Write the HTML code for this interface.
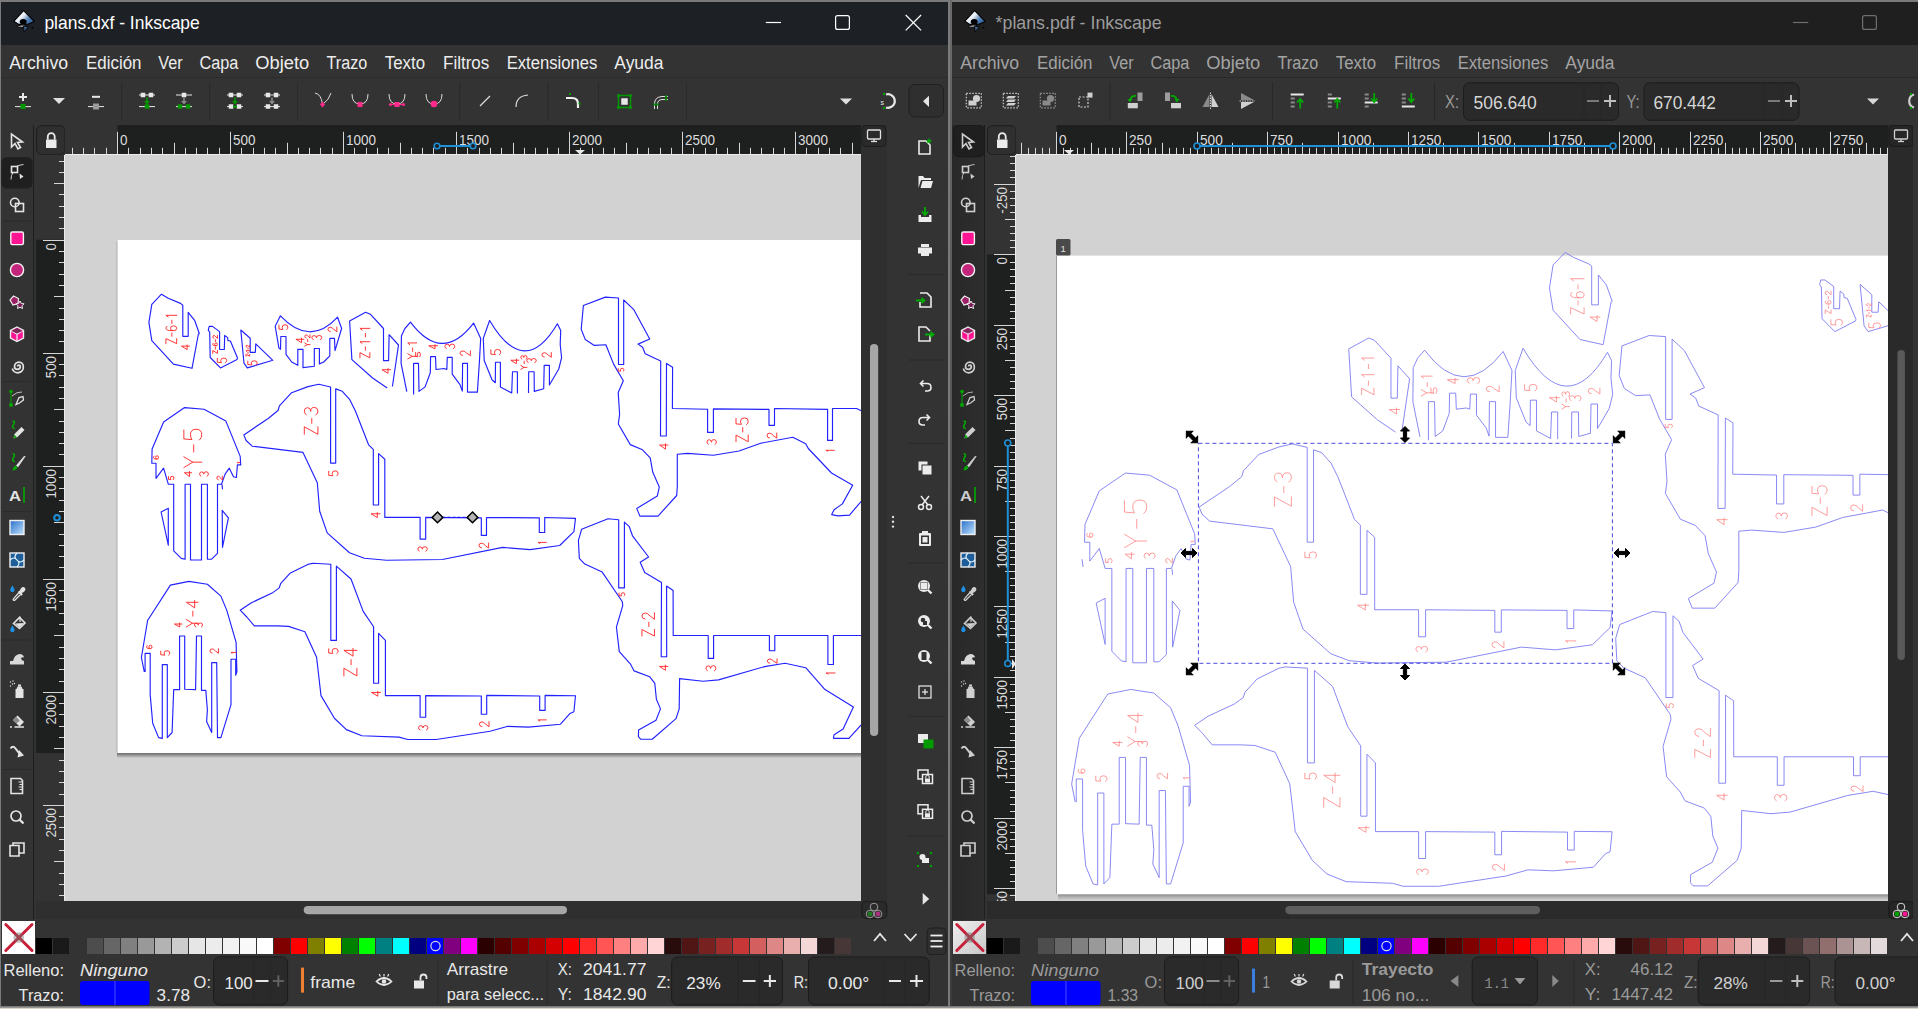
<!DOCTYPE html><html><head><meta charset="utf-8"><style>*{margin:0;padding:0}html,body{width:1918px;height:1009px;overflow:hidden;background:#7a7a7a}svg{position:absolute;left:0;top:0;display:block}</style></head><body><svg width="1918" height="1009" viewBox="0 0 1918 1009" font-family="Liberation Sans"><defs><linearGradient id="lg" x1="0.1" y1="0.2" x2="0.95" y2="0.75"><stop offset="0" stop-color="#ffffff"/><stop offset="0.4" stop-color="#e8eef5"/><stop offset="0.7" stop-color="#5b86b8"/><stop offset="1" stop-color="#2f5f9a"/></linearGradient></defs><rect x="0" y="0" width="1918" height="1009" fill="#7a7a7a"/>
<rect x="1" y="2" width="947" height="1004" fill="#333333" />
<rect x="1" y="2" width="947" height="43" fill="#1d2126" />
<line x1="1" y1="77.5" x2="948" y2="77.5" stroke="#2c2c2c" stroke-width="1" />
<rect x="952" y="2" width="966" height="1004" fill="#333333" />
<rect x="952" y="2" width="966" height="43" fill="#1f1f1f" />
<line x1="952" y1="77.5" x2="1918" y2="77.5" stroke="#282828" stroke-width="1" />
<defs><linearGradient id="tbR" x1="0" y1="0" x2="1" y2="0"><stop offset="0" stop-color="#282828"/><stop offset="1" stop-color="#2e2e2e"/></linearGradient></defs>
<rect x="952" y="125" width="32.5" height="795" fill="url(#tbR)" />
<defs><linearGradient id="bd" x1="0" y1="0" x2="0" y2="1"><stop offset="0" stop-color="#6a6a6a"/><stop offset="1" stop-color="#3a3a3a"/></linearGradient></defs>
<rect x="950" y="0" width="2" height="1006" fill="url(#bd)" />
<rect x="0" y="1006" width="1918" height="1.7" fill="#7a7a7a" />
<rect x="0" y="1007.7" width="1918" height="1.3" fill="#d8d3c2" />
<g transform="translate(0,0)"><path d="M23.6,10.6 L34.2,21.4 L28,24.2 L23.5,23.8 L19,24.6 L13.9,21.1 Z" fill="url(#lg)" stroke="#000" stroke-width="1.1" stroke-linejoin="round"/><ellipse cx="23.2" cy="21.8" rx="3.4" ry="2.7" fill="#000"/><path d="M17.2,26.3 Q21,24 26,25.2 L23,27.6 L18.5,27.2 Z" fill="#9a9a9a" stroke="#000" stroke-width="0.8"/><path d="M23.5,26 L28.2,26.8 L24.2,31.8 Z" fill="#3f6390" stroke="#000" stroke-width="0.8"/><circle cx="32.5" cy="27.7" r="0.9" fill="#000"/></g>
<text x="44.4" y="29" font-size="19" fill="#ffffff" textLength="155.4" lengthAdjust="spacingAndGlyphs" >plans.dxf - Inkscape</text>
<line x1="765.8" y1="22.5" x2="781" y2="22.5" stroke="#ffffff" stroke-width="1.2" />
<rect x="835.6" y="15.6" width="13.8" height="13.8" rx="2" fill="none" stroke="#fff" stroke-width="1.2"/>
<line x1="905.7" y1="15" x2="921.1" y2="30.4" stroke="#fff" stroke-width="1.2" />
<line x1="921.1" y1="15" x2="905.7" y2="30.4" stroke="#fff" stroke-width="1.2" />
<g transform="translate(951,0)"><path d="M23.6,10.6 L34.2,21.4 L28,24.2 L23.5,23.8 L19,24.6 L13.9,21.1 Z" fill="url(#lg)" stroke="#000" stroke-width="1.1" stroke-linejoin="round"/><ellipse cx="23.2" cy="21.8" rx="3.4" ry="2.7" fill="#000"/><path d="M17.2,26.3 Q21,24 26,25.2 L23,27.6 L18.5,27.2 Z" fill="#9a9a9a" stroke="#000" stroke-width="0.8"/><path d="M23.5,26 L28.2,26.8 L24.2,31.8 Z" fill="#3f6390" stroke="#000" stroke-width="0.8"/><circle cx="32.5" cy="27.7" r="0.9" fill="#000"/></g>
<text x="995.6" y="29" font-size="19" fill="#9c9c9c" textLength="166" lengthAdjust="spacingAndGlyphs" >*plans.pdf - Inkscape</text>
<line x1="1792.9" y1="22.5" x2="1808.3" y2="22.5" stroke="#6e6e6e" stroke-width="1.2" />
<rect x="1862.6" y="15.6" width="13.8" height="13.8" rx="2" fill="none" stroke="#6e6e6e" stroke-width="1.2"/>
<text x="9.2" y="68.9" font-size="18" fill="#ededed" textLength="59" lengthAdjust="spacingAndGlyphs" >Archivo</text>
<text x="960.2" y="68.9" font-size="18" fill="#a3a3a3" textLength="59" lengthAdjust="spacingAndGlyphs" >Archivo</text>
<text x="86" y="68.9" font-size="18" fill="#ededed" textLength="55.5" lengthAdjust="spacingAndGlyphs" >Edición</text>
<text x="1037" y="68.9" font-size="18" fill="#a3a3a3" textLength="55.5" lengthAdjust="spacingAndGlyphs" >Edición</text>
<text x="158.3" y="68.9" font-size="18" fill="#ededed" textLength="24.3" lengthAdjust="spacingAndGlyphs" >Ver</text>
<text x="1109.3" y="68.9" font-size="18" fill="#a3a3a3" textLength="24.3" lengthAdjust="spacingAndGlyphs" >Ver</text>
<text x="199.4" y="68.9" font-size="18" fill="#ededed" textLength="39" lengthAdjust="spacingAndGlyphs" >Capa</text>
<text x="1150.4" y="68.9" font-size="18" fill="#a3a3a3" textLength="39" lengthAdjust="spacingAndGlyphs" >Capa</text>
<text x="255.3" y="68.9" font-size="18" fill="#ededed" textLength="54" lengthAdjust="spacingAndGlyphs" >Objeto</text>
<text x="1206.3" y="68.9" font-size="18" fill="#a3a3a3" textLength="54" lengthAdjust="spacingAndGlyphs" >Objeto</text>
<text x="326.6" y="68.9" font-size="18" fill="#ededed" textLength="40.7" lengthAdjust="spacingAndGlyphs" >Trazo</text>
<text x="1277.6" y="68.9" font-size="18" fill="#a3a3a3" textLength="40.7" lengthAdjust="spacingAndGlyphs" >Trazo</text>
<text x="384.8" y="68.9" font-size="18" fill="#ededed" textLength="40.3" lengthAdjust="spacingAndGlyphs" >Texto</text>
<text x="1335.8" y="68.9" font-size="18" fill="#a3a3a3" textLength="40.3" lengthAdjust="spacingAndGlyphs" >Texto</text>
<text x="443" y="68.9" font-size="18" fill="#ededed" textLength="46.3" lengthAdjust="spacingAndGlyphs" >Filtros</text>
<text x="1394" y="68.9" font-size="18" fill="#a3a3a3" textLength="46.3" lengthAdjust="spacingAndGlyphs" >Filtros</text>
<text x="506.7" y="68.9" font-size="18" fill="#ededed" textLength="90.7" lengthAdjust="spacingAndGlyphs" >Extensiones</text>
<text x="1457.7" y="68.9" font-size="18" fill="#a3a3a3" textLength="90.7" lengthAdjust="spacingAndGlyphs" >Extensiones</text>
<text x="614.3" y="68.9" font-size="18" fill="#ededed" textLength="49.2" lengthAdjust="spacingAndGlyphs" >Ayuda</text>
<text x="1565.3" y="68.9" font-size="18" fill="#a3a3a3" textLength="49.2" lengthAdjust="spacingAndGlyphs" >Ayuda</text>
<line x1="121.7" y1="82" x2="121.7" y2="121" stroke="#2b2b2b" stroke-width="1" />
<line x1="209.7" y1="82" x2="209.7" y2="121" stroke="#2b2b2b" stroke-width="1" />
<line x1="297.5" y1="82" x2="297.5" y2="121" stroke="#2b2b2b" stroke-width="1" />
<line x1="459.7" y1="82" x2="459.7" y2="121" stroke="#2b2b2b" stroke-width="1" />
<line x1="547.8" y1="82" x2="547.8" y2="121" stroke="#2b2b2b" stroke-width="1" />
<line x1="598.6" y1="82" x2="598.6" y2="121" stroke="#2b2b2b" stroke-width="1" />
<line x1="686.5" y1="82" x2="686.5" y2="121" stroke="#2b2b2b" stroke-width="1" />
<line x1="1110" y1="82" x2="1110" y2="121" stroke="#282828" stroke-width="1" />
<line x1="1272.5" y1="82" x2="1272.5" y2="121" stroke="#282828" stroke-width="1" />
<line x1="1434.6" y1="82" x2="1434.6" y2="121" stroke="#282828" stroke-width="1" />
<line x1="19" y1="97" x2="27" y2="97" stroke="#e8e8e8" stroke-width="2" />
<line x1="23" y1="93" x2="23" y2="101" stroke="#e8e8e8" stroke-width="2" />
<line x1="15" y1="106.6" x2="31" y2="106.6" stroke="#e8e8e8" stroke-width="1" />
<rect x="20.5" y="104.0" width="5" height="5" fill="#009900" />
<path d="M53,98 L65,98 L59,104 Z" fill="#e0e0e0" stroke="none" stroke-width="1" />
<line x1="92" y1="96.8" x2="100" y2="96.8" stroke="#e8e8e8" stroke-width="2" />
<line x1="88" y1="106.6" x2="104" y2="106.6" stroke="#e8e8e8" stroke-width="1" />
<rect x="93.0" y="103.5" width="6" height="6" fill="#9a9a9a" />
<line x1="139" y1="95" x2="155" y2="95" stroke="#e8e8e8" stroke-width="1" />
<rect x="140.75" y="92.75" width="4.5" height="4.5" fill="#e8e8e8" />
<rect x="148.75" y="92.75" width="4.5" height="4.5" fill="#e8e8e8" />
<path d="M147,97.5 L147,101" fill="none" stroke="#009900" stroke-width="1.6" />
<path d="M144,101 L150,101 L147,104.5 Z" fill="#009900" stroke="none" stroke-width="1" />
<line x1="139" y1="106.6" x2="155" y2="106.6" stroke="#e8e8e8" stroke-width="1" />
<rect x="144.75" y="104.25" width="4.5" height="4.5" fill="#009900" />
<line x1="176" y1="95" x2="192" y2="95" stroke="#e8e8e8" stroke-width="1" />
<rect x="181.75" y="92.75" width="4.5" height="4.5" fill="#e8e8e8" />
<path d="M184,97.5 L184,101" fill="none" stroke="#8a8a8a" stroke-width="1.6" />
<path d="M181,101 L187,101 L184,104.5 Z" fill="#8a8a8a" stroke="none" stroke-width="1" />
<line x1="176" y1="106.6" x2="192" y2="106.6" stroke="#e8e8e8" stroke-width="1" />
<rect x="177.75" y="104.25" width="4.5" height="4.5" fill="#009900" />
<rect x="185.75" y="104.25" width="4.5" height="4.5" fill="#009900" />
<line x1="227" y1="95" x2="243" y2="95" stroke="#e8e8e8" stroke-width="1" />
<rect x="228.75" y="92.75" width="4.5" height="4.5" fill="#e8e8e8" />
<rect x="236.75" y="92.75" width="4.5" height="4.5" fill="#e8e8e8" />
<path d="M235,97.5 L235,101" fill="none" stroke="#009900" stroke-width="1.6" />
<path d="M232,101 L238,101 L235,104.5 Z" fill="#009900" stroke="none" stroke-width="1" />
<line x1="227" y1="106.6" x2="243" y2="106.6" stroke="#e8e8e8" stroke-width="1" />
<rect x="228.75" y="104.25" width="4.5" height="4.5" fill="#e8e8e8" />
<rect x="236.75" y="104.25" width="4.5" height="4.5" fill="#e8e8e8" />
<line x1="233" y1="106.6" x2="237" y2="106.6" stroke="#009900" stroke-width="2" />
<line x1="264" y1="95" x2="280" y2="95" stroke="#e8e8e8" stroke-width="1" />
<rect x="265.75" y="92.75" width="4.5" height="4.5" fill="#e8e8e8" />
<rect x="273.75" y="92.75" width="4.5" height="4.5" fill="#e8e8e8" />
<line x1="270" y1="95" x2="274" y2="95" stroke="#8a8a8a" stroke-width="2" />
<path d="M272,97.5 L272,101" fill="none" stroke="#8a8a8a" stroke-width="1.6" />
<path d="M269,101 L275,101 L272,104.5 Z" fill="#8a8a8a" stroke="none" stroke-width="1" />
<line x1="264" y1="106.6" x2="280" y2="106.6" stroke="#e8e8e8" stroke-width="1" />
<rect x="265.75" y="104.25" width="4.5" height="4.5" fill="#e8e8e8" />
<rect x="273.75" y="104.25" width="4.5" height="4.5" fill="#e8e8e8" />
<path d="M315,93 Q321,94 322.5,104 M331,93 Q329,100 323,104" fill="none" stroke="#dddddd" stroke-width="1" />
<path d="M322.5,101.5 L325,104.5 L322.5,107.5 L320,104.5 Z" fill="#ff2a8a" stroke="none" stroke-width="1" />
<path d="M352,94 Q352,104 360,104 Q368,104 368,94" fill="none" stroke="#dddddd" stroke-width="1" />
<rect x="357.5" y="102.0" width="5" height="5" fill="#ff2a8a" />
<path d="M389,94 Q389,104 397,104 Q405,104 405,94" fill="none" stroke="#dddddd" stroke-width="1" />
<rect x="394.5" y="102.0" width="5" height="5" fill="#ff2a8a" />
<line x1="390" y1="104.5" x2="404" y2="104.5" stroke="#ff2a8a" stroke-width="1.2" />
<circle cx="390.5" cy="104.5" r="1.6" fill="#ff2a8a"/><circle cx="403.5" cy="104.5" r="1.6" fill="#ff2a8a"/>
<path d="M426,94 Q426,104 434,104 Q442,104 442,94" fill="none" stroke="#dddddd" stroke-width="1" />
<circle cx="434" cy="104" r="3.3" fill="#ff2a8a"/>
<line x1="480" y1="106" x2="490" y2="96" stroke="#dddddd" stroke-width="1.2" />
<path d="M516,107 Q516,96 528,95" fill="none" stroke="#dddddd" stroke-width="1.2" />
<path d="M566,98 L572,98 Q578,98 578,104 L578,108" fill="none" stroke="#f0f0f0" stroke-width="2.2" />
<rect x="569.0" y="93.0" width="2" height="2" fill="#009900" />
<rect x="578.5" y="102.5" width="2" height="2" fill="#009900" />
<rect x="618.5" y="95.5" width="12" height="12" fill="none" stroke="#009900" stroke-width="1.5"/>
<rect x="621.25" y="98.25" width="6.5" height="6.5" fill="#e8e8e8" />
<rect x="617.2" y="94.2" width="2.6" height="2.6" fill="#009900" />
<rect x="629.2" y="94.2" width="2.6" height="2.6" fill="#009900" />
<rect x="617.2" y="106.2" width="2.6" height="2.6" fill="#009900" />
<rect x="629.2" y="106.2" width="2.6" height="2.6" fill="#009900" />
<path d="M654.5,109 L654.5,104 Q654.5,97 662,96.5 L668,96.5 M657.5,109 L657.5,104 Q657.5,100 662,99.5 L668,99.5" fill="none" stroke="#e0e0e0" stroke-width="1" />
<rect x="653.4" y="103.4" width="2.2" height="2.2" fill="#009900" />
<rect x="656.4" y="103.4" width="2.2" height="2.2" fill="#009900" />
<rect x="664.9" y="95.4" width="2.2" height="2.2" fill="#009900" />
<rect x="664.9" y="98.4" width="2.2" height="2.2" fill="#009900" />
<path d="M840,98.6 L852,98.6 L846,104.6 Z" fill="#e0e0e0" stroke="none" stroke-width="1" />
<path d="M886,94.5 A6.8,6.8 0 1 1 886,107.5" fill="none" stroke="#e8e8e8" stroke-width="2.2" />
<rect x="882.9" y="92.9" width="2.2" height="2.2" fill="#009900" />
<rect x="882.9" y="106.9" width="2.2" height="2.2" fill="#009900" />
<text x="880.5" y="104.5" font-size="7" fill="#e8e8e8" >s</text>
<rect x="909" y="84.5" width="34.5" height="32.5" rx="6" fill="#2f2f2f" stroke="#202020" stroke-width="1"/>
<path d="M929,95.7 L929,106.9 L923,101.3 Z" fill="#e6e6e6" stroke="none" stroke-width="1" />
<rect x="966.3" y="93.3" width="15" height="14.5" fill="none" stroke="#d0d0d0" stroke-width="1.2" stroke-dasharray="1.5,1.5"/>
<circle cx="976.5" cy="98.5" r="3.6" fill="#d0d0d0"/>
<rect x="968.5" y="100.5" width="8" height="5" fill="#d0d0d0" />
<rect x="1003.3" y="93.3" width="15" height="14.5" fill="none" stroke="#d0d0d0" stroke-width="1.2" stroke-dasharray="1.5,1.5"/>
<path d="M1006,98.5 L1008,96 L1016,96 L1014,98.5 Z" fill="#d0d0d0" stroke="none" stroke-width="1" />
<path d="M1006,102.0 L1008,99.5 L1016,99.5 L1014,102.0 Z" fill="#d0d0d0" stroke="none" stroke-width="1" />
<path d="M1006,105.5 L1008,103 L1016,103 L1014,105.5 Z" fill="#d0d0d0" stroke="none" stroke-width="1" />
<rect x="1040.3" y="93.3" width="15" height="14.5" fill="none" stroke="#9a9a9a" stroke-width="1.2" stroke-dasharray="1.5,1.5"/>
<circle cx="1050.5" cy="98.5" r="3.6" fill="#8a8a8a"/>
<rect x="1042.5" y="100.5" width="8" height="5" fill="#8a8a8a" />
<rect x="1079" y="97" width="9" height="10" fill="none" stroke="#d0d0d0" stroke-width="1.2" stroke-dasharray="2,1.5"/>
<rect x="1087.5" y="92.6" width="5" height="5" fill="#d0d0d0" />
<rect x="1137.5" y="92.5" width="5" height="8.5" fill="#9c9c9c" />
<rect x="1127.8" y="103" width="10" height="5.3" fill="#d0d0d0" />
<path d="M1136,96 Q1131,95.5 1130,100.5" fill="none" stroke="#00aa00" stroke-width="1.8" />
<path d="M1127.5,99 L1130,102.5 L1132.5,99 Z" fill="#00aa00" stroke="none" stroke-width="1" />
<rect x="1165" y="92.5" width="5" height="8.5" fill="#9c9c9c" />
<rect x="1171" y="103" width="10" height="5.3" fill="#d0d0d0" />
<path d="M1171,96 Q1176,95.5 1177,100.5" fill="none" stroke="#00aa00" stroke-width="1.8" />
<path d="M1174.5,99 L1177,102.5 L1179.5,99 Z" fill="#00aa00" stroke="none" stroke-width="1" />
<path d="M1209.5,94 L1209.5,107 L1202.5,107 Z" fill="#8a8a8a" stroke="none" stroke-width="1" />
<path d="M1211.5,94 L1211.5,107 L1218.5,107 Z" fill="#d0d0d0" stroke="none" stroke-width="1" />
<line x1="1210.5" y1="92.5" x2="1210.5" y2="109" stroke="#d0d0d0" stroke-width="1" stroke-dasharray="1.5,1"/>
<path d="M1241,93 L1241,100 L1254,100 Z" fill="#8a8a8a" stroke="none" stroke-width="1" />
<path d="M1241,102 L1241,109 L1254,102 Z" fill="#d0d0d0" stroke="none" stroke-width="1" />
<line x1="1239.5" y1="101" x2="1255" y2="101" stroke="#d0d0d0" stroke-width="1" stroke-dasharray="1.5,1"/>
<rect x="1290.7" y="93.5" width="13" height="2" fill="#e8e8e8" />
<rect x="1290.7" y="97.5" width="4" height="2" fill="#8a8a8a" />
<rect x="1290.7" y="101.5" width="4" height="2" fill="#8a8a8a" />
<rect x="1290.7" y="105.5" width="4" height="2" fill="#8a8a8a" />
<path d="M1300.2,108.5 L1300.2,100 M1297.2,102.5 L1300.2,99 L1303.2,102.5" fill="none" stroke="#00aa00" stroke-width="1.8" />
<rect x="1327.8" y="93.5" width="4" height="2" fill="#8a8a8a" />
<rect x="1327.8" y="97.5" width="13" height="2" fill="#e8e8e8" />
<rect x="1327.8" y="101.5" width="4" height="2" fill="#8a8a8a" />
<rect x="1327.8" y="105.5" width="4" height="2" fill="#8a8a8a" />
<path d="M1337.3,108.5 L1337.3,100 M1334.3,102.5 L1337.3,99 L1340.3,102.5" fill="none" stroke="#00aa00" stroke-width="1.8" />
<rect x="1364.7" y="93.5" width="4" height="2" fill="#8a8a8a" />
<rect x="1364.7" y="97.5" width="4" height="2" fill="#8a8a8a" />
<rect x="1364.7" y="101.5" width="13" height="2" fill="#e8e8e8" />
<rect x="1364.7" y="105.5" width="4" height="2" fill="#8a8a8a" />
<path d="M1374.2,93 L1374.2,101 M1371.2,98.5 L1374.2,102 L1377.2,98.5" fill="none" stroke="#00aa00" stroke-width="1.8" />
<rect x="1401.8" y="93.5" width="4" height="2" fill="#8a8a8a" />
<rect x="1401.8" y="97.5" width="4" height="2" fill="#8a8a8a" />
<rect x="1401.8" y="101.5" width="4" height="2" fill="#8a8a8a" />
<rect x="1401.8" y="105.5" width="13" height="2" fill="#e8e8e8" />
<path d="M1411.3,93 L1411.3,101 M1408.3,98.5 L1411.3,102 L1414.3,98.5" fill="none" stroke="#00aa00" stroke-width="1.8" />
<text x="1445" y="108.4" font-size="18" fill="#9a9a9a" textLength="14" lengthAdjust="spacingAndGlyphs" >X:</text>
<rect x="1463.5" y="82.8" width="155" height="37.5" rx="6" fill="#2a2a2a" stroke="#1c1c1c" stroke-width="1"/>
<line x1="1584" y1="83.8" x2="1584" y2="119.3" stroke="#262626" stroke-width="1" />
<line x1="1601.4" y1="83.8" x2="1601.4" y2="119.3" stroke="#262626" stroke-width="1" />
<text x="1473.6" y="108.6" font-size="18" fill="#d6d6d6" textLength="63.2" lengthAdjust="spacingAndGlyphs" >506.640</text>
<line x1="1587" y1="101" x2="1599" y2="101" stroke="#7a7a7a" stroke-width="2" />
<line x1="1604" y1="101" x2="1616" y2="101" stroke="#bdbdbd" stroke-width="2" />
<line x1="1610" y1="95" x2="1610" y2="107" stroke="#bdbdbd" stroke-width="2" />
<text x="1626.5" y="108.4" font-size="18" fill="#9a9a9a" textLength="13.1" lengthAdjust="spacingAndGlyphs" >Y:</text>
<rect x="1644" y="82.8" width="155" height="37.5" rx="6" fill="#2a2a2a" stroke="#1c1c1c" stroke-width="1"/>
<line x1="1764.5" y1="83.8" x2="1764.5" y2="119.3" stroke="#262626" stroke-width="1" />
<line x1="1782" y1="83.8" x2="1782" y2="119.3" stroke="#262626" stroke-width="1" />
<text x="1653.4" y="108.6" font-size="18" fill="#d6d6d6" textLength="62.6" lengthAdjust="spacingAndGlyphs" >670.442</text>
<line x1="1768" y1="101" x2="1780" y2="101" stroke="#7a7a7a" stroke-width="2" />
<line x1="1785" y1="101" x2="1797" y2="101" stroke="#bdbdbd" stroke-width="2" />
<line x1="1791" y1="95" x2="1791" y2="107" stroke="#bdbdbd" stroke-width="2" />
<path d="M1867,98.6 L1879,98.6 L1873,104.6 Z" fill="#d8d8d8" stroke="none" stroke-width="1" />
<path d="M1914,94.5 A6.8,6.8 0 0 0 1914,107.5" fill="none" stroke="#cfcfcf" stroke-width="2.2" />
<rect x="1909.9" y="92.9" width="2.2" height="2.2" fill="#009900" />
<rect x="1909.9" y="106.9" width="2.2" height="2.2" fill="#009900" />
<line x1="33.5" y1="125" x2="33.5" y2="919" stroke="#1e1e1e" stroke-width="1" />
<line x1="3" y1="221" x2="31" y2="221" stroke="#2b2b2b" stroke-width="1" />
<line x1="3" y1="381.5" x2="31" y2="381.5" stroke="#2b2b2b" stroke-width="1" />
<line x1="3" y1="511.5" x2="31" y2="511.5" stroke="#2b2b2b" stroke-width="1" />
<line x1="3" y1="640" x2="31" y2="640" stroke="#2b2b2b" stroke-width="1" />
<line x1="3" y1="769.5" x2="31" y2="769.5" stroke="#2b2b2b" stroke-width="1" />
<rect x="1.5" y="157.2" width="31" height="31.2" rx="5" fill="#1f1f1f"/>
<g transform="translate(0,0)">
<path d="M11.5,134 L11.5,147 L15,143.5 L18,149 L20.5,147.5 L17.5,142.5 L22.5,142 Z" fill="none" stroke="#e4e4e4" stroke-width="1.6" />
<rect x="11.5" y="166.5" width="6" height="6" fill="none" stroke="#e4e4e4" stroke-width="1.6"/>
<path d="M17,166 Q20,165 23.5,164.5" fill="none" stroke="#e4e4e4" stroke-width="0.9" />
<path d="M11,179.5 Q11,175 13,172.5" fill="none" stroke="#e4e4e4" stroke-width="0.9" />
<path d="M19.5,173.5 L23.5,176.5 L20,179 Z" fill="#e4e4e4" stroke="none" stroke-width="1" />
<circle cx="14.8" cy="202.5" r="4.3" fill="none" stroke="#e4e4e4" stroke-width="1.6"/>
<rect x="15.5" y="203.5" width="8" height="8" fill="none" stroke="#e4e4e4" stroke-width="1.6"/>
<rect x="10.8" y="232" width="12.6" height="12.6" rx="1.5" fill="#ff1493" stroke="#f4f4f4" stroke-width="1.4"/>
<circle cx="17" cy="270" r="6.6" fill="#c2257a" stroke="#f4f4f4" stroke-width="1.4"/>
<path d="M13.5,296 L18.5,298.5 L18,303.5 L13,305 L10,300 Z" fill="#9d1f66" stroke="#f0f0f0" stroke-width="1.2" />
<path d="M20,301 L21.3,303.5 L24,303.8 L22,305.8 L22.5,308.5 L20,307.2 L17.5,308.5 L18,305.8 L16,303.8 L18.7,303.5 Z" fill="#7a1a55" stroke="#f0f0f0" stroke-width="1" />
<path d="M17,327 L23.5,330.5 L23.5,338 L17,341.5 L10.5,338 L10.5,330.5 Z" fill="#ff1493" stroke="#f0f0f0" stroke-width="1.4" />
<path d="M10.5,330.5 L17,334 L23.5,330.5 M17,334 L17,341.5" fill="none" stroke="#f0f0f0" stroke-width="1.2" />
<path d="M11.5,331 L17,328 L22.5,331 L17,333.5 Z" fill="#7b2a5c" stroke="none" stroke-width="1" />
<path d="M17.5,366.5 A1.4,1.4 0 0 1 20.3,366.5 A2.9,2.9 0 0 1 14.5,366.5 A4.4,4.4 0 0 1 23.3,366.5 A5.6,5.6 0 0 1 12.3,368.5" fill="none" stroke="#e4e4e4" stroke-width="1.7" />
<circle cx="11" cy="391.5" r="1.8" fill="#0a0"/>
<line x1="11" y1="392" x2="11" y2="404" stroke="#0a0" stroke-width="1" />
<rect x="9.3" y="403.3" width="3.4" height="3.4" fill="#0a0" />
<path d="M12,396 Q17,391.5 22,392" fill="none" stroke="#e4e4e4" stroke-width="0.8" />
<path d="M16,404.5 L19,397.5 L23,396.5 L23.5,400 L19.5,403 Z" fill="none" stroke="#e4e4e4" stroke-width="1.3" />
<path d="M12.5,421.5 Q16,420.5 13.5,424.5 Q11,428.5 15,428.5" fill="none" stroke="#0a0" stroke-width="1.5" />
<path d="M13.5,438.5 L14.5,434 L21.5,427 L24.5,430 L17.5,437 Z" fill="#e4e4e4" stroke="none" stroke-width="1" />
<path d="M13.5,438.5 L14.5,434.8 L17,437.3 Z" fill="#0a0" stroke="none" stroke-width="1" />
<path d="M12.5,454 Q16,453.5 13.5,457.5 Q11,461.5 15,461.5" fill="none" stroke="#0a0" stroke-width="1.5" />
<path d="M12.5,470.5 Q13,466.5 15.5,465.5 L17.5,467.5 Q16.5,470 12.5,470.5 Z" fill="#0a0" stroke="none" stroke-width="1" />
<path d="M16.5,465.5 L24.5,456 L25,456.5 L18,466.8 Z" fill="#e4e4e4" stroke="#e4e4e4" stroke-width="0.8" />
<text x="9" y="501" font-size="14" fill="#e4e4e4" textLength="12" lengthAdjust="spacingAndGlyphs" font-weight="bold">A</text>
<line x1="24" y1="487" x2="24" y2="503" stroke="#0a0" stroke-width="1.6" />
<defs><linearGradient id="gg" x1="0" y1="0" x2="1" y2="1"><stop offset="0" stop-color="#2b6fc9"/><stop offset="1" stop-color="#bfe3ff"/></linearGradient></defs>
<rect x="10" y="520.5" width="14" height="14" fill="url(#gg)" stroke="#f0f0f0" stroke-width="1.4"/>
<rect x="10" y="553" width="14" height="14" fill="#1f5f99" stroke="#f0f0f0" stroke-width="1.4"/>
<path d="M10,560 Q14,556 17,560 Q20,564 24,560 M17,553 Q13,557 17,560 Q21,563 17,567" fill="none" stroke="#e8f4ff" stroke-width="1.1" />
<path d="M12.4,585.5 Q9.8,589.5 10.2,590.5 Q10.8,592.2 12.4,592.2 Q14,592.2 14.6,590.5 Q15,589.5 12.4,585.5 Z" fill="#1e90e8" stroke="none" stroke-width="1" />
<path d="M13.6,598.6 Q12.6,599.6 13.6,600.2 Q14.4,600.6 15,600 L21,594 L19.2,592.2 Z" fill="none" stroke="#e4e4e4" stroke-width="1.3" />
<path d="M18.6,591.4 L22.2,595 M20.6,590.8 Q22.6,586.6 24.2,588.4 Q25.6,590 21.4,592.2 Z" fill="#e4e4e4" stroke="#e4e4e4" stroke-width="1.8" />
<path d="M12.4,625.5 Q9.8,629.5 10.2,630.5 Q10.8,632.2 12.4,632.2 Q14,632.2 14.6,630.5 Q15,629.5 12.4,625.5 Z" fill="#1e90e8" stroke="none" stroke-width="1" />
<path d="M13.5,623.5 L19.5,617.5 L25,623 L19.5,628.5 Z" fill="none" stroke="#e4e4e4" stroke-width="1.6" />
<path d="M15,623.5 L24,623 L19.5,627.5 Z" fill="#e4e4e4" stroke="none" stroke-width="1" />
<line x1="20" y1="616.5" x2="20" y2="622" stroke="#e4e4e4" stroke-width="1.2" />
<path d="M10,664.5 L10,661 L13,661 Q14.5,654.5 19.5,654 Q23.5,654 24,657.5 Q22,656.5 21,658.5 Q21.5,660.5 24,661 L24,664.5 Z" fill="#d8d8d8" stroke="none" stroke-width="1" />
<rect x="15.5" y="689" width="8" height="9" fill="#e4e4e4" />
<path d="M16.5,689 L17.5,686.5 L21.5,686.5 L22.5,689 Z" fill="#e4e4e4" stroke="none" stroke-width="1" />
<rect x="18" y="684.5" width="3" height="2" fill="#e4e4e4" />
<circle cx="10.5" cy="682" r="0.7" fill="#e4e4e4"/>
<circle cx="12.5" cy="684" r="0.7" fill="#e4e4e4"/>
<circle cx="10.5" cy="686" r="0.7" fill="#e4e4e4"/>
<circle cx="13" cy="681" r="0.7" fill="#e4e4e4"/>
<circle cx="14.5" cy="683.5" r="0.7" fill="#e4e4e4"/>
<path d="M17.5,715.5 L24,722 L19.5,726.5 L13,720 Z" fill="#e4e4e4" stroke="none" stroke-width="1" />
<path d="M13,720 L16.2,716.8 L19.8,720.4 L16.6,723.6 Z" fill="#8a8a8a" stroke="none" stroke-width="1" />
<line x1="10" y1="727" x2="12" y2="727" stroke="#e4e4e4" stroke-width="1.5" />
<line x1="14.5" y1="727" x2="24" y2="727" stroke="#e4e4e4" stroke-width="1.5" />
<path d="M10.5,748.5 Q13,745 15.5,748.5 Q18,752.5 21,754" fill="none" stroke="#e4e4e4" stroke-width="2" />
<path d="M19,750 L24,755.5 L17.5,757.5 Z" fill="#e4e4e4" stroke="none" stroke-width="1" />
<path d="M11,778.5 L20.5,778.5 L22.5,780.5 L22.5,793.5 L11,793.5 Z" fill="none" stroke="#e4e4e4" stroke-width="1.6" />
<line x1="18.5" y1="782" x2="22.5" y2="782" stroke="#e4e4e4" stroke-width="1" />
<line x1="19.5" y1="784.5" x2="22.5" y2="784.5" stroke="#e4e4e4" stroke-width="1" />
<line x1="18.5" y1="787" x2="22.5" y2="787" stroke="#e4e4e4" stroke-width="1" />
<line x1="19.5" y1="789.5" x2="22.5" y2="789.5" stroke="#e4e4e4" stroke-width="1" />
<circle cx="16" cy="816" r="5" fill="none" stroke="#e4e4e4" stroke-width="1.7"/>
<line x1="19.6" y1="819.6" x2="23.5" y2="823.5" stroke="#e4e4e4" stroke-width="2.2" />
<path d="M10,845.5 L10,856 L19,856 L19,845.5 Z" fill="none" stroke="#e4e4e4" stroke-width="1.6" />
<path d="M13,845.5 L13,843 L24,843 L24,853 L19,853" fill="none" stroke="#e4e4e4" stroke-width="1.6" />
</g>
<line x1="984.5" y1="125" x2="984.5" y2="919" stroke="#1e1e1e" stroke-width="1" />
<line x1="954" y1="221" x2="982" y2="221" stroke="#2b2b2b" stroke-width="1" />
<line x1="954" y1="381.5" x2="982" y2="381.5" stroke="#2b2b2b" stroke-width="1" />
<line x1="954" y1="511.5" x2="982" y2="511.5" stroke="#2b2b2b" stroke-width="1" />
<line x1="954" y1="640" x2="982" y2="640" stroke="#2b2b2b" stroke-width="1" />
<line x1="954" y1="769.5" x2="982" y2="769.5" stroke="#2b2b2b" stroke-width="1" />
<rect x="953.5" y="125.5" width="31" height="31.2" rx="5" fill="#1f1f1f" stroke="#1a1a1a"/>
<g transform="translate(951,0)">
<path d="M11.5,134 L11.5,147 L15,143.5 L18,149 L20.5,147.5 L17.5,142.5 L22.5,142 Z" fill="none" stroke="#cfcfcf" stroke-width="1.6" />
<rect x="11.5" y="166.5" width="6" height="6" fill="none" stroke="#cfcfcf" stroke-width="1.6"/>
<path d="M17,166 Q20,165 23.5,164.5" fill="none" stroke="#cfcfcf" stroke-width="0.9" />
<path d="M11,179.5 Q11,175 13,172.5" fill="none" stroke="#cfcfcf" stroke-width="0.9" />
<path d="M19.5,173.5 L23.5,176.5 L20,179 Z" fill="#cfcfcf" stroke="none" stroke-width="1" />
<circle cx="14.8" cy="202.5" r="4.3" fill="none" stroke="#cfcfcf" stroke-width="1.6"/>
<rect x="15.5" y="203.5" width="8" height="8" fill="none" stroke="#cfcfcf" stroke-width="1.6"/>
<rect x="10.8" y="232" width="12.6" height="12.6" rx="1.5" fill="#ff1493" stroke="#f4f4f4" stroke-width="1.4"/>
<circle cx="17" cy="270" r="6.6" fill="#c2257a" stroke="#f4f4f4" stroke-width="1.4"/>
<path d="M13.5,296 L18.5,298.5 L18,303.5 L13,305 L10,300 Z" fill="#9d1f66" stroke="#f0f0f0" stroke-width="1.2" />
<path d="M20,301 L21.3,303.5 L24,303.8 L22,305.8 L22.5,308.5 L20,307.2 L17.5,308.5 L18,305.8 L16,303.8 L18.7,303.5 Z" fill="#7a1a55" stroke="#f0f0f0" stroke-width="1" />
<path d="M17,327 L23.5,330.5 L23.5,338 L17,341.5 L10.5,338 L10.5,330.5 Z" fill="#ff1493" stroke="#f0f0f0" stroke-width="1.4" />
<path d="M10.5,330.5 L17,334 L23.5,330.5 M17,334 L17,341.5" fill="none" stroke="#f0f0f0" stroke-width="1.2" />
<path d="M11.5,331 L17,328 L22.5,331 L17,333.5 Z" fill="#7b2a5c" stroke="none" stroke-width="1" />
<path d="M17.5,366.5 A1.4,1.4 0 0 1 20.3,366.5 A2.9,2.9 0 0 1 14.5,366.5 A4.4,4.4 0 0 1 23.3,366.5 A5.6,5.6 0 0 1 12.3,368.5" fill="none" stroke="#cfcfcf" stroke-width="1.7" />
<circle cx="11" cy="391.5" r="1.8" fill="#0a0"/>
<line x1="11" y1="392" x2="11" y2="404" stroke="#0a0" stroke-width="1" />
<rect x="9.3" y="403.3" width="3.4" height="3.4" fill="#0a0" />
<path d="M12,396 Q17,391.5 22,392" fill="none" stroke="#cfcfcf" stroke-width="0.8" />
<path d="M16,404.5 L19,397.5 L23,396.5 L23.5,400 L19.5,403 Z" fill="none" stroke="#cfcfcf" stroke-width="1.3" />
<path d="M12.5,421.5 Q16,420.5 13.5,424.5 Q11,428.5 15,428.5" fill="none" stroke="#0a0" stroke-width="1.5" />
<path d="M13.5,438.5 L14.5,434 L21.5,427 L24.5,430 L17.5,437 Z" fill="#cfcfcf" stroke="none" stroke-width="1" />
<path d="M13.5,438.5 L14.5,434.8 L17,437.3 Z" fill="#0a0" stroke="none" stroke-width="1" />
<path d="M12.5,454 Q16,453.5 13.5,457.5 Q11,461.5 15,461.5" fill="none" stroke="#0a0" stroke-width="1.5" />
<path d="M12.5,470.5 Q13,466.5 15.5,465.5 L17.5,467.5 Q16.5,470 12.5,470.5 Z" fill="#0a0" stroke="none" stroke-width="1" />
<path d="M16.5,465.5 L24.5,456 L25,456.5 L18,466.8 Z" fill="#cfcfcf" stroke="#cfcfcf" stroke-width="0.8" />
<text x="9" y="501" font-size="14" fill="#cfcfcf" textLength="12" lengthAdjust="spacingAndGlyphs" font-weight="bold">A</text>
<line x1="24" y1="487" x2="24" y2="503" stroke="#0a0" stroke-width="1.6" />
<defs><linearGradient id="gg" x1="0" y1="0" x2="1" y2="1"><stop offset="0" stop-color="#2b6fc9"/><stop offset="1" stop-color="#bfe3ff"/></linearGradient></defs>
<rect x="10" y="520.5" width="14" height="14" fill="url(#gg)" stroke="#f0f0f0" stroke-width="1.4"/>
<rect x="10" y="553" width="14" height="14" fill="#1f5f99" stroke="#f0f0f0" stroke-width="1.4"/>
<path d="M10,560 Q14,556 17,560 Q20,564 24,560 M17,553 Q13,557 17,560 Q21,563 17,567" fill="none" stroke="#e8f4ff" stroke-width="1.1" />
<path d="M12.4,585.5 Q9.8,589.5 10.2,590.5 Q10.8,592.2 12.4,592.2 Q14,592.2 14.6,590.5 Q15,589.5 12.4,585.5 Z" fill="#1e90e8" stroke="none" stroke-width="1" />
<path d="M13.6,598.6 Q12.6,599.6 13.6,600.2 Q14.4,600.6 15,600 L21,594 L19.2,592.2 Z" fill="none" stroke="#cfcfcf" stroke-width="1.3" />
<path d="M18.6,591.4 L22.2,595 M20.6,590.8 Q22.6,586.6 24.2,588.4 Q25.6,590 21.4,592.2 Z" fill="#cfcfcf" stroke="#cfcfcf" stroke-width="1.8" />
<path d="M12.4,625.5 Q9.8,629.5 10.2,630.5 Q10.8,632.2 12.4,632.2 Q14,632.2 14.6,630.5 Q15,629.5 12.4,625.5 Z" fill="#1e90e8" stroke="none" stroke-width="1" />
<path d="M13.5,623.5 L19.5,617.5 L25,623 L19.5,628.5 Z" fill="none" stroke="#cfcfcf" stroke-width="1.6" />
<path d="M15,623.5 L24,623 L19.5,627.5 Z" fill="#cfcfcf" stroke="none" stroke-width="1" />
<line x1="20" y1="616.5" x2="20" y2="622" stroke="#cfcfcf" stroke-width="1.2" />
<path d="M10,664.5 L10,661 L13,661 Q14.5,654.5 19.5,654 Q23.5,654 24,657.5 Q22,656.5 21,658.5 Q21.5,660.5 24,661 L24,664.5 Z" fill="#d8d8d8" stroke="none" stroke-width="1" />
<rect x="15.5" y="689" width="8" height="9" fill="#cfcfcf" />
<path d="M16.5,689 L17.5,686.5 L21.5,686.5 L22.5,689 Z" fill="#cfcfcf" stroke="none" stroke-width="1" />
<rect x="18" y="684.5" width="3" height="2" fill="#cfcfcf" />
<circle cx="10.5" cy="682" r="0.7" fill="#cfcfcf"/>
<circle cx="12.5" cy="684" r="0.7" fill="#cfcfcf"/>
<circle cx="10.5" cy="686" r="0.7" fill="#cfcfcf"/>
<circle cx="13" cy="681" r="0.7" fill="#cfcfcf"/>
<circle cx="14.5" cy="683.5" r="0.7" fill="#cfcfcf"/>
<path d="M17.5,715.5 L24,722 L19.5,726.5 L13,720 Z" fill="#cfcfcf" stroke="none" stroke-width="1" />
<path d="M13,720 L16.2,716.8 L19.8,720.4 L16.6,723.6 Z" fill="#8a8a8a" stroke="none" stroke-width="1" />
<line x1="10" y1="727" x2="12" y2="727" stroke="#cfcfcf" stroke-width="1.5" />
<line x1="14.5" y1="727" x2="24" y2="727" stroke="#cfcfcf" stroke-width="1.5" />
<path d="M10.5,748.5 Q13,745 15.5,748.5 Q18,752.5 21,754" fill="none" stroke="#cfcfcf" stroke-width="2" />
<path d="M19,750 L24,755.5 L17.5,757.5 Z" fill="#cfcfcf" stroke="none" stroke-width="1" />
<path d="M11,778.5 L20.5,778.5 L22.5,780.5 L22.5,793.5 L11,793.5 Z" fill="none" stroke="#cfcfcf" stroke-width="1.6" />
<line x1="18.5" y1="782" x2="22.5" y2="782" stroke="#cfcfcf" stroke-width="1" />
<line x1="19.5" y1="784.5" x2="22.5" y2="784.5" stroke="#cfcfcf" stroke-width="1" />
<line x1="18.5" y1="787" x2="22.5" y2="787" stroke="#cfcfcf" stroke-width="1" />
<line x1="19.5" y1="789.5" x2="22.5" y2="789.5" stroke="#cfcfcf" stroke-width="1" />
<circle cx="16" cy="816" r="5" fill="none" stroke="#cfcfcf" stroke-width="1.7"/>
<line x1="19.6" y1="819.6" x2="23.5" y2="823.5" stroke="#cfcfcf" stroke-width="2.2" />
<path d="M10,845.5 L10,856 L19,856 L19,845.5 Z" fill="none" stroke="#cfcfcf" stroke-width="1.6" />
<path d="M13,845.5 L13,843 L24,843 L24,853 L19,853" fill="none" stroke="#cfcfcf" stroke-width="1.6" />
</g>
<rect x="36.5" y="125.7" width="28.5" height="28.8" rx="5" fill="#2f2f2f" stroke="#1d1d1d" stroke-width="1"/>
<rect x="46" y="139.5" width="10.5" height="8.5" fill="#ececec"/>
<path d="M47.8,139.5 L47.8,136.5 A3.45,3.45 0 0 1 54.7,136.5 L54.7,139.5" fill="none" stroke="#ececec" stroke-width="1.8" />
<rect x="987.5" y="125.7" width="28.5" height="28.8" rx="5" fill="#2f2f2f" stroke="#1d1d1d" stroke-width="1"/>
<rect x="997" y="139.5" width="10.5" height="8.5" fill="#ececec"/>
<path d="M998.8,139.5 L998.8,136.5 A3.45,3.45 0 0 1 1005.7,136.5 L1005.7,139.5" fill="none" stroke="#ececec" stroke-width="1.8" />
<rect x="65" y="125" width="796" height="29.5" fill="#333333" />
<rect x="117.5" y="125" width="743.5" height="29.5" fill="#1e1f1f" />
<line x1="72.5" y1="147.8" x2="72.5" y2="154.5" stroke="#d6d6d6" stroke-width="1" />
<line x1="83.5" y1="147.8" x2="83.5" y2="154.5" stroke="#d6d6d6" stroke-width="1" />
<line x1="94.5" y1="147.8" x2="94.5" y2="154.5" stroke="#d6d6d6" stroke-width="1" />
<line x1="106.5" y1="147.8" x2="106.5" y2="154.5" stroke="#d6d6d6" stroke-width="1" />
<line x1="117.5" y1="131.8" x2="117.5" y2="154.5" stroke="#d6d6d6" stroke-width="1" />
<text x="120" y="144.6" font-size="14.5" fill="#dcdcdc" textLength="7.5" lengthAdjust="spacingAndGlyphs" >0</text>
<line x1="128.5" y1="147.8" x2="128.5" y2="154.5" stroke="#d6d6d6" stroke-width="1" />
<line x1="140.5" y1="147.8" x2="140.5" y2="154.5" stroke="#d6d6d6" stroke-width="1" />
<line x1="151.5" y1="147.8" x2="151.5" y2="154.5" stroke="#d6d6d6" stroke-width="1" />
<line x1="162.5" y1="147.8" x2="162.5" y2="154.5" stroke="#d6d6d6" stroke-width="1" />
<line x1="174.5" y1="142.8" x2="174.5" y2="154.5" stroke="#d6d6d6" stroke-width="1" />
<line x1="185.5" y1="147.8" x2="185.5" y2="154.5" stroke="#d6d6d6" stroke-width="1" />
<line x1="196.5" y1="147.8" x2="196.5" y2="154.5" stroke="#d6d6d6" stroke-width="1" />
<line x1="207.5" y1="147.8" x2="207.5" y2="154.5" stroke="#d6d6d6" stroke-width="1" />
<line x1="219.5" y1="147.8" x2="219.5" y2="154.5" stroke="#d6d6d6" stroke-width="1" />
<line x1="230.5" y1="131.8" x2="230.5" y2="154.5" stroke="#d6d6d6" stroke-width="1" />
<text x="233" y="144.6" font-size="14.5" fill="#dcdcdc" textLength="22.5" lengthAdjust="spacingAndGlyphs" >500</text>
<line x1="241.5" y1="147.8" x2="241.5" y2="154.5" stroke="#d6d6d6" stroke-width="1" />
<line x1="253.5" y1="147.8" x2="253.5" y2="154.5" stroke="#d6d6d6" stroke-width="1" />
<line x1="264.5" y1="147.8" x2="264.5" y2="154.5" stroke="#d6d6d6" stroke-width="1" />
<line x1="275.5" y1="147.8" x2="275.5" y2="154.5" stroke="#d6d6d6" stroke-width="1" />
<line x1="287.5" y1="142.8" x2="287.5" y2="154.5" stroke="#d6d6d6" stroke-width="1" />
<line x1="298.5" y1="147.8" x2="298.5" y2="154.5" stroke="#d6d6d6" stroke-width="1" />
<line x1="309.5" y1="147.8" x2="309.5" y2="154.5" stroke="#d6d6d6" stroke-width="1" />
<line x1="320.5" y1="147.8" x2="320.5" y2="154.5" stroke="#d6d6d6" stroke-width="1" />
<line x1="332.5" y1="147.8" x2="332.5" y2="154.5" stroke="#d6d6d6" stroke-width="1" />
<line x1="343.5" y1="131.8" x2="343.5" y2="154.5" stroke="#d6d6d6" stroke-width="1" />
<text x="346" y="144.6" font-size="14.5" fill="#dcdcdc" textLength="30.0" lengthAdjust="spacingAndGlyphs" >1000</text>
<line x1="354.5" y1="147.8" x2="354.5" y2="154.5" stroke="#d6d6d6" stroke-width="1" />
<line x1="366.5" y1="147.8" x2="366.5" y2="154.5" stroke="#d6d6d6" stroke-width="1" />
<line x1="377.5" y1="147.8" x2="377.5" y2="154.5" stroke="#d6d6d6" stroke-width="1" />
<line x1="388.5" y1="147.8" x2="388.5" y2="154.5" stroke="#d6d6d6" stroke-width="1" />
<line x1="400.5" y1="142.8" x2="400.5" y2="154.5" stroke="#d6d6d6" stroke-width="1" />
<line x1="411.5" y1="147.8" x2="411.5" y2="154.5" stroke="#d6d6d6" stroke-width="1" />
<line x1="422.5" y1="147.8" x2="422.5" y2="154.5" stroke="#d6d6d6" stroke-width="1" />
<line x1="433.5" y1="147.8" x2="433.5" y2="154.5" stroke="#d6d6d6" stroke-width="1" />
<line x1="445.5" y1="147.8" x2="445.5" y2="154.5" stroke="#d6d6d6" stroke-width="1" />
<line x1="456.5" y1="131.8" x2="456.5" y2="154.5" stroke="#d6d6d6" stroke-width="1" />
<text x="459" y="144.6" font-size="14.5" fill="#dcdcdc" textLength="30.0" lengthAdjust="spacingAndGlyphs" >1500</text>
<line x1="467.5" y1="147.8" x2="467.5" y2="154.5" stroke="#d6d6d6" stroke-width="1" />
<line x1="479.5" y1="147.8" x2="479.5" y2="154.5" stroke="#d6d6d6" stroke-width="1" />
<line x1="490.5" y1="147.8" x2="490.5" y2="154.5" stroke="#d6d6d6" stroke-width="1" />
<line x1="501.5" y1="147.8" x2="501.5" y2="154.5" stroke="#d6d6d6" stroke-width="1" />
<line x1="513.5" y1="142.8" x2="513.5" y2="154.5" stroke="#d6d6d6" stroke-width="1" />
<line x1="524.5" y1="147.8" x2="524.5" y2="154.5" stroke="#d6d6d6" stroke-width="1" />
<line x1="535.5" y1="147.8" x2="535.5" y2="154.5" stroke="#d6d6d6" stroke-width="1" />
<line x1="547.5" y1="147.8" x2="547.5" y2="154.5" stroke="#d6d6d6" stroke-width="1" />
<line x1="558.5" y1="147.8" x2="558.5" y2="154.5" stroke="#d6d6d6" stroke-width="1" />
<line x1="569.5" y1="131.8" x2="569.5" y2="154.5" stroke="#d6d6d6" stroke-width="1" />
<text x="572" y="144.6" font-size="14.5" fill="#dcdcdc" textLength="30.0" lengthAdjust="spacingAndGlyphs" >2000</text>
<line x1="580.5" y1="147.8" x2="580.5" y2="154.5" stroke="#d6d6d6" stroke-width="1" />
<line x1="592.5" y1="147.8" x2="592.5" y2="154.5" stroke="#d6d6d6" stroke-width="1" />
<line x1="603.5" y1="147.8" x2="603.5" y2="154.5" stroke="#d6d6d6" stroke-width="1" />
<line x1="614.5" y1="147.8" x2="614.5" y2="154.5" stroke="#d6d6d6" stroke-width="1" />
<line x1="626.5" y1="142.8" x2="626.5" y2="154.5" stroke="#d6d6d6" stroke-width="1" />
<line x1="637.5" y1="147.8" x2="637.5" y2="154.5" stroke="#d6d6d6" stroke-width="1" />
<line x1="648.5" y1="147.8" x2="648.5" y2="154.5" stroke="#d6d6d6" stroke-width="1" />
<line x1="660.5" y1="147.8" x2="660.5" y2="154.5" stroke="#d6d6d6" stroke-width="1" />
<line x1="671.5" y1="147.8" x2="671.5" y2="154.5" stroke="#d6d6d6" stroke-width="1" />
<line x1="682.5" y1="131.8" x2="682.5" y2="154.5" stroke="#d6d6d6" stroke-width="1" />
<text x="685" y="144.6" font-size="14.5" fill="#dcdcdc" textLength="30.0" lengthAdjust="spacingAndGlyphs" >2500</text>
<line x1="693.5" y1="147.8" x2="693.5" y2="154.5" stroke="#d6d6d6" stroke-width="1" />
<line x1="705.5" y1="147.8" x2="705.5" y2="154.5" stroke="#d6d6d6" stroke-width="1" />
<line x1="716.5" y1="147.8" x2="716.5" y2="154.5" stroke="#d6d6d6" stroke-width="1" />
<line x1="727.5" y1="147.8" x2="727.5" y2="154.5" stroke="#d6d6d6" stroke-width="1" />
<line x1="739.5" y1="142.8" x2="739.5" y2="154.5" stroke="#d6d6d6" stroke-width="1" />
<line x1="750.5" y1="147.8" x2="750.5" y2="154.5" stroke="#d6d6d6" stroke-width="1" />
<line x1="761.5" y1="147.8" x2="761.5" y2="154.5" stroke="#d6d6d6" stroke-width="1" />
<line x1="773.5" y1="147.8" x2="773.5" y2="154.5" stroke="#d6d6d6" stroke-width="1" />
<line x1="784.5" y1="147.8" x2="784.5" y2="154.5" stroke="#d6d6d6" stroke-width="1" />
<line x1="795.5" y1="131.8" x2="795.5" y2="154.5" stroke="#d6d6d6" stroke-width="1" />
<text x="798" y="144.6" font-size="14.5" fill="#dcdcdc" textLength="30.0" lengthAdjust="spacingAndGlyphs" >3000</text>
<line x1="806.5" y1="147.8" x2="806.5" y2="154.5" stroke="#d6d6d6" stroke-width="1" />
<line x1="818.5" y1="147.8" x2="818.5" y2="154.5" stroke="#d6d6d6" stroke-width="1" />
<line x1="829.5" y1="147.8" x2="829.5" y2="154.5" stroke="#d6d6d6" stroke-width="1" />
<line x1="840.5" y1="147.8" x2="840.5" y2="154.5" stroke="#d6d6d6" stroke-width="1" />
<line x1="852.5" y1="142.8" x2="852.5" y2="154.5" stroke="#d6d6d6" stroke-width="1" />
<clipPath id="vr36"><rect x="36" y="154.5" width="29" height="746.5"/></clipPath><g clip-path="url(#vr36)">
<rect x="36" y="154.5" width="29" height="746.5" fill="#333333" />
<rect x="36" y="239.7" width="29" height="513.3" fill="#1e1f1f" />
<line x1="59" y1="161.5" x2="65" y2="161.5" stroke="#d6d6d6" stroke-width="1" />
<line x1="59" y1="172.5" x2="65" y2="172.5" stroke="#d6d6d6" stroke-width="1" />
<line x1="54" y1="183.5" x2="65" y2="183.5" stroke="#d6d6d6" stroke-width="1" />
<line x1="59" y1="194.5" x2="65" y2="194.5" stroke="#d6d6d6" stroke-width="1" />
<line x1="59" y1="206.5" x2="65" y2="206.5" stroke="#d6d6d6" stroke-width="1" />
<line x1="59" y1="217.5" x2="65" y2="217.5" stroke="#d6d6d6" stroke-width="1" />
<line x1="59" y1="228.5" x2="65" y2="228.5" stroke="#d6d6d6" stroke-width="1" />
<line x1="43" y1="240.5" x2="65" y2="240.5" stroke="#d6d6d6" stroke-width="1" />
<text transform="translate(56.3,243.0) rotate(-90)" text-anchor="end" font-size="14.5" fill="#dcdcdc" textLength="7.4" lengthAdjust="spacingAndGlyphs">0</text>
<line x1="59" y1="251.5" x2="65" y2="251.5" stroke="#d6d6d6" stroke-width="1" />
<line x1="59" y1="262.5" x2="65" y2="262.5" stroke="#d6d6d6" stroke-width="1" />
<line x1="59" y1="274.5" x2="65" y2="274.5" stroke="#d6d6d6" stroke-width="1" />
<line x1="59" y1="285.5" x2="65" y2="285.5" stroke="#d6d6d6" stroke-width="1" />
<line x1="54" y1="296.5" x2="65" y2="296.5" stroke="#d6d6d6" stroke-width="1" />
<line x1="59" y1="308.5" x2="65" y2="308.5" stroke="#d6d6d6" stroke-width="1" />
<line x1="59" y1="319.5" x2="65" y2="319.5" stroke="#d6d6d6" stroke-width="1" />
<line x1="59" y1="330.5" x2="65" y2="330.5" stroke="#d6d6d6" stroke-width="1" />
<line x1="59" y1="341.5" x2="65" y2="341.5" stroke="#d6d6d6" stroke-width="1" />
<line x1="43" y1="353.5" x2="65" y2="353.5" stroke="#d6d6d6" stroke-width="1" />
<text transform="translate(56.3,356.0) rotate(-90)" text-anchor="end" font-size="14.5" fill="#dcdcdc" textLength="22.200000000000003" lengthAdjust="spacingAndGlyphs">500</text>
<line x1="59" y1="364.5" x2="65" y2="364.5" stroke="#d6d6d6" stroke-width="1" />
<line x1="59" y1="375.5" x2="65" y2="375.5" stroke="#d6d6d6" stroke-width="1" />
<line x1="59" y1="387.5" x2="65" y2="387.5" stroke="#d6d6d6" stroke-width="1" />
<line x1="59" y1="398.5" x2="65" y2="398.5" stroke="#d6d6d6" stroke-width="1" />
<line x1="54" y1="409.5" x2="65" y2="409.5" stroke="#d6d6d6" stroke-width="1" />
<line x1="59" y1="421.5" x2="65" y2="421.5" stroke="#d6d6d6" stroke-width="1" />
<line x1="59" y1="432.5" x2="65" y2="432.5" stroke="#d6d6d6" stroke-width="1" />
<line x1="59" y1="443.5" x2="65" y2="443.5" stroke="#d6d6d6" stroke-width="1" />
<line x1="59" y1="454.5" x2="65" y2="454.5" stroke="#d6d6d6" stroke-width="1" />
<line x1="43" y1="466.5" x2="65" y2="466.5" stroke="#d6d6d6" stroke-width="1" />
<text transform="translate(56.3,469.0) rotate(-90)" text-anchor="end" font-size="14.5" fill="#dcdcdc" textLength="29.6" lengthAdjust="spacingAndGlyphs">1000</text>
<line x1="59" y1="477.5" x2="65" y2="477.5" stroke="#d6d6d6" stroke-width="1" />
<line x1="59" y1="488.5" x2="65" y2="488.5" stroke="#d6d6d6" stroke-width="1" />
<line x1="59" y1="500.5" x2="65" y2="500.5" stroke="#d6d6d6" stroke-width="1" />
<line x1="59" y1="511.5" x2="65" y2="511.5" stroke="#d6d6d6" stroke-width="1" />
<line x1="54" y1="522.5" x2="65" y2="522.5" stroke="#d6d6d6" stroke-width="1" />
<line x1="59" y1="534.5" x2="65" y2="534.5" stroke="#d6d6d6" stroke-width="1" />
<line x1="59" y1="545.5" x2="65" y2="545.5" stroke="#d6d6d6" stroke-width="1" />
<line x1="59" y1="556.5" x2="65" y2="556.5" stroke="#d6d6d6" stroke-width="1" />
<line x1="59" y1="567.5" x2="65" y2="567.5" stroke="#d6d6d6" stroke-width="1" />
<line x1="43" y1="579.5" x2="65" y2="579.5" stroke="#d6d6d6" stroke-width="1" />
<text transform="translate(56.3,582.0) rotate(-90)" text-anchor="end" font-size="14.5" fill="#dcdcdc" textLength="29.6" lengthAdjust="spacingAndGlyphs">1500</text>
<line x1="59" y1="590.5" x2="65" y2="590.5" stroke="#d6d6d6" stroke-width="1" />
<line x1="59" y1="601.5" x2="65" y2="601.5" stroke="#d6d6d6" stroke-width="1" />
<line x1="59" y1="613.5" x2="65" y2="613.5" stroke="#d6d6d6" stroke-width="1" />
<line x1="59" y1="624.5" x2="65" y2="624.5" stroke="#d6d6d6" stroke-width="1" />
<line x1="54" y1="635.5" x2="65" y2="635.5" stroke="#d6d6d6" stroke-width="1" />
<line x1="59" y1="647.5" x2="65" y2="647.5" stroke="#d6d6d6" stroke-width="1" />
<line x1="59" y1="658.5" x2="65" y2="658.5" stroke="#d6d6d6" stroke-width="1" />
<line x1="59" y1="669.5" x2="65" y2="669.5" stroke="#d6d6d6" stroke-width="1" />
<line x1="59" y1="681.5" x2="65" y2="681.5" stroke="#d6d6d6" stroke-width="1" />
<line x1="43" y1="692.5" x2="65" y2="692.5" stroke="#d6d6d6" stroke-width="1" />
<text transform="translate(56.3,695.0) rotate(-90)" text-anchor="end" font-size="14.5" fill="#dcdcdc" textLength="29.6" lengthAdjust="spacingAndGlyphs">2000</text>
<line x1="59" y1="703.5" x2="65" y2="703.5" stroke="#d6d6d6" stroke-width="1" />
<line x1="59" y1="714.5" x2="65" y2="714.5" stroke="#d6d6d6" stroke-width="1" />
<line x1="59" y1="726.5" x2="65" y2="726.5" stroke="#d6d6d6" stroke-width="1" />
<line x1="59" y1="737.5" x2="65" y2="737.5" stroke="#d6d6d6" stroke-width="1" />
<line x1="54" y1="748.5" x2="65" y2="748.5" stroke="#d6d6d6" stroke-width="1" />
<line x1="59" y1="760.5" x2="65" y2="760.5" stroke="#d6d6d6" stroke-width="1" />
<line x1="59" y1="771.5" x2="65" y2="771.5" stroke="#d6d6d6" stroke-width="1" />
<line x1="59" y1="782.5" x2="65" y2="782.5" stroke="#d6d6d6" stroke-width="1" />
<line x1="59" y1="794.5" x2="65" y2="794.5" stroke="#d6d6d6" stroke-width="1" />
<line x1="43" y1="805.5" x2="65" y2="805.5" stroke="#d6d6d6" stroke-width="1" />
<text transform="translate(56.3,808.0) rotate(-90)" text-anchor="end" font-size="14.5" fill="#dcdcdc" textLength="29.6" lengthAdjust="spacingAndGlyphs">2500</text>
<line x1="59" y1="816.5" x2="65" y2="816.5" stroke="#d6d6d6" stroke-width="1" />
<line x1="59" y1="827.5" x2="65" y2="827.5" stroke="#d6d6d6" stroke-width="1" />
<line x1="59" y1="839.5" x2="65" y2="839.5" stroke="#d6d6d6" stroke-width="1" />
<line x1="59" y1="850.5" x2="65" y2="850.5" stroke="#d6d6d6" stroke-width="1" />
<line x1="54" y1="861.5" x2="65" y2="861.5" stroke="#d6d6d6" stroke-width="1" />
<line x1="59" y1="873.5" x2="65" y2="873.5" stroke="#d6d6d6" stroke-width="1" />
<line x1="59" y1="884.5" x2="65" y2="884.5" stroke="#d6d6d6" stroke-width="1" />
<line x1="59" y1="895.5" x2="65" y2="895.5" stroke="#d6d6d6" stroke-width="1" />
</g>
<rect x="1016" y="125" width="872" height="29.5" fill="#333333" />
<rect x="1056.5" y="125" width="831.5" height="29.5" fill="#1e1f1f" />
<line x1="1021.5" y1="142.8" x2="1021.5" y2="154.5" stroke="#d6d6d6" stroke-width="1" />
<line x1="1028.5" y1="147.8" x2="1028.5" y2="154.5" stroke="#d6d6d6" stroke-width="1" />
<line x1="1035.5" y1="147.8" x2="1035.5" y2="154.5" stroke="#d6d6d6" stroke-width="1" />
<line x1="1042.5" y1="147.8" x2="1042.5" y2="154.5" stroke="#d6d6d6" stroke-width="1" />
<line x1="1049.5" y1="147.8" x2="1049.5" y2="154.5" stroke="#d6d6d6" stroke-width="1" />
<line x1="1056.5" y1="131.8" x2="1056.5" y2="154.5" stroke="#d6d6d6" stroke-width="1" />
<text x="1059" y="144.6" font-size="14.5" fill="#dcdcdc" textLength="7.6" lengthAdjust="spacingAndGlyphs" >0</text>
<line x1="1063.5" y1="147.8" x2="1063.5" y2="154.5" stroke="#d6d6d6" stroke-width="1" />
<line x1="1070.5" y1="147.8" x2="1070.5" y2="154.5" stroke="#d6d6d6" stroke-width="1" />
<line x1="1077.5" y1="147.8" x2="1077.5" y2="154.5" stroke="#d6d6d6" stroke-width="1" />
<line x1="1084.5" y1="147.8" x2="1084.5" y2="154.5" stroke="#d6d6d6" stroke-width="1" />
<line x1="1091.5" y1="142.8" x2="1091.5" y2="154.5" stroke="#d6d6d6" stroke-width="1" />
<line x1="1098.5" y1="147.8" x2="1098.5" y2="154.5" stroke="#d6d6d6" stroke-width="1" />
<line x1="1105.5" y1="147.8" x2="1105.5" y2="154.5" stroke="#d6d6d6" stroke-width="1" />
<line x1="1112.5" y1="147.8" x2="1112.5" y2="154.5" stroke="#d6d6d6" stroke-width="1" />
<line x1="1119.5" y1="147.8" x2="1119.5" y2="154.5" stroke="#d6d6d6" stroke-width="1" />
<line x1="1126.5" y1="131.8" x2="1126.5" y2="154.5" stroke="#d6d6d6" stroke-width="1" />
<text x="1129" y="144.6" font-size="14.5" fill="#dcdcdc" textLength="22.799999999999997" lengthAdjust="spacingAndGlyphs" >250</text>
<line x1="1133.5" y1="147.8" x2="1133.5" y2="154.5" stroke="#d6d6d6" stroke-width="1" />
<line x1="1140.5" y1="147.8" x2="1140.5" y2="154.5" stroke="#d6d6d6" stroke-width="1" />
<line x1="1148.5" y1="147.8" x2="1148.5" y2="154.5" stroke="#d6d6d6" stroke-width="1" />
<line x1="1155.5" y1="147.8" x2="1155.5" y2="154.5" stroke="#d6d6d6" stroke-width="1" />
<line x1="1162.5" y1="142.8" x2="1162.5" y2="154.5" stroke="#d6d6d6" stroke-width="1" />
<line x1="1169.5" y1="147.8" x2="1169.5" y2="154.5" stroke="#d6d6d6" stroke-width="1" />
<line x1="1176.5" y1="147.8" x2="1176.5" y2="154.5" stroke="#d6d6d6" stroke-width="1" />
<line x1="1183.5" y1="147.8" x2="1183.5" y2="154.5" stroke="#d6d6d6" stroke-width="1" />
<line x1="1190.5" y1="147.8" x2="1190.5" y2="154.5" stroke="#d6d6d6" stroke-width="1" />
<line x1="1197.5" y1="131.8" x2="1197.5" y2="154.5" stroke="#d6d6d6" stroke-width="1" />
<text x="1200" y="144.6" font-size="14.5" fill="#dcdcdc" textLength="22.799999999999997" lengthAdjust="spacingAndGlyphs" >500</text>
<line x1="1204.5" y1="147.8" x2="1204.5" y2="154.5" stroke="#d6d6d6" stroke-width="1" />
<line x1="1211.5" y1="147.8" x2="1211.5" y2="154.5" stroke="#d6d6d6" stroke-width="1" />
<line x1="1218.5" y1="147.8" x2="1218.5" y2="154.5" stroke="#d6d6d6" stroke-width="1" />
<line x1="1225.5" y1="147.8" x2="1225.5" y2="154.5" stroke="#d6d6d6" stroke-width="1" />
<line x1="1232.5" y1="142.8" x2="1232.5" y2="154.5" stroke="#d6d6d6" stroke-width="1" />
<line x1="1239.5" y1="147.8" x2="1239.5" y2="154.5" stroke="#d6d6d6" stroke-width="1" />
<line x1="1246.5" y1="147.8" x2="1246.5" y2="154.5" stroke="#d6d6d6" stroke-width="1" />
<line x1="1253.5" y1="147.8" x2="1253.5" y2="154.5" stroke="#d6d6d6" stroke-width="1" />
<line x1="1260.5" y1="147.8" x2="1260.5" y2="154.5" stroke="#d6d6d6" stroke-width="1" />
<line x1="1267.5" y1="131.8" x2="1267.5" y2="154.5" stroke="#d6d6d6" stroke-width="1" />
<text x="1270" y="144.6" font-size="14.5" fill="#dcdcdc" textLength="22.799999999999997" lengthAdjust="spacingAndGlyphs" >750</text>
<line x1="1274.5" y1="147.8" x2="1274.5" y2="154.5" stroke="#d6d6d6" stroke-width="1" />
<line x1="1281.5" y1="147.8" x2="1281.5" y2="154.5" stroke="#d6d6d6" stroke-width="1" />
<line x1="1288.5" y1="147.8" x2="1288.5" y2="154.5" stroke="#d6d6d6" stroke-width="1" />
<line x1="1295.5" y1="147.8" x2="1295.5" y2="154.5" stroke="#d6d6d6" stroke-width="1" />
<line x1="1302.5" y1="142.8" x2="1302.5" y2="154.5" stroke="#d6d6d6" stroke-width="1" />
<line x1="1309.5" y1="147.8" x2="1309.5" y2="154.5" stroke="#d6d6d6" stroke-width="1" />
<line x1="1316.5" y1="147.8" x2="1316.5" y2="154.5" stroke="#d6d6d6" stroke-width="1" />
<line x1="1324.5" y1="147.8" x2="1324.5" y2="154.5" stroke="#d6d6d6" stroke-width="1" />
<line x1="1331.5" y1="147.8" x2="1331.5" y2="154.5" stroke="#d6d6d6" stroke-width="1" />
<line x1="1338.5" y1="131.8" x2="1338.5" y2="154.5" stroke="#d6d6d6" stroke-width="1" />
<text x="1341" y="144.6" font-size="14.5" fill="#dcdcdc" textLength="30.4" lengthAdjust="spacingAndGlyphs" >1000</text>
<line x1="1345.5" y1="147.8" x2="1345.5" y2="154.5" stroke="#d6d6d6" stroke-width="1" />
<line x1="1352.5" y1="147.8" x2="1352.5" y2="154.5" stroke="#d6d6d6" stroke-width="1" />
<line x1="1359.5" y1="147.8" x2="1359.5" y2="154.5" stroke="#d6d6d6" stroke-width="1" />
<line x1="1366.5" y1="147.8" x2="1366.5" y2="154.5" stroke="#d6d6d6" stroke-width="1" />
<line x1="1373.5" y1="142.8" x2="1373.5" y2="154.5" stroke="#d6d6d6" stroke-width="1" />
<line x1="1380.5" y1="147.8" x2="1380.5" y2="154.5" stroke="#d6d6d6" stroke-width="1" />
<line x1="1387.5" y1="147.8" x2="1387.5" y2="154.5" stroke="#d6d6d6" stroke-width="1" />
<line x1="1394.5" y1="147.8" x2="1394.5" y2="154.5" stroke="#d6d6d6" stroke-width="1" />
<line x1="1401.5" y1="147.8" x2="1401.5" y2="154.5" stroke="#d6d6d6" stroke-width="1" />
<line x1="1408.5" y1="131.8" x2="1408.5" y2="154.5" stroke="#d6d6d6" stroke-width="1" />
<text x="1411" y="144.6" font-size="14.5" fill="#dcdcdc" textLength="30.4" lengthAdjust="spacingAndGlyphs" >1250</text>
<line x1="1415.5" y1="147.8" x2="1415.5" y2="154.5" stroke="#d6d6d6" stroke-width="1" />
<line x1="1422.5" y1="147.8" x2="1422.5" y2="154.5" stroke="#d6d6d6" stroke-width="1" />
<line x1="1429.5" y1="147.8" x2="1429.5" y2="154.5" stroke="#d6d6d6" stroke-width="1" />
<line x1="1436.5" y1="147.8" x2="1436.5" y2="154.5" stroke="#d6d6d6" stroke-width="1" />
<line x1="1443.5" y1="142.8" x2="1443.5" y2="154.5" stroke="#d6d6d6" stroke-width="1" />
<line x1="1450.5" y1="147.8" x2="1450.5" y2="154.5" stroke="#d6d6d6" stroke-width="1" />
<line x1="1457.5" y1="147.8" x2="1457.5" y2="154.5" stroke="#d6d6d6" stroke-width="1" />
<line x1="1464.5" y1="147.8" x2="1464.5" y2="154.5" stroke="#d6d6d6" stroke-width="1" />
<line x1="1471.5" y1="147.8" x2="1471.5" y2="154.5" stroke="#d6d6d6" stroke-width="1" />
<line x1="1478.5" y1="131.8" x2="1478.5" y2="154.5" stroke="#d6d6d6" stroke-width="1" />
<text x="1481" y="144.6" font-size="14.5" fill="#dcdcdc" textLength="30.4" lengthAdjust="spacingAndGlyphs" >1500</text>
<line x1="1485.5" y1="147.8" x2="1485.5" y2="154.5" stroke="#d6d6d6" stroke-width="1" />
<line x1="1492.5" y1="147.8" x2="1492.5" y2="154.5" stroke="#d6d6d6" stroke-width="1" />
<line x1="1500.5" y1="147.8" x2="1500.5" y2="154.5" stroke="#d6d6d6" stroke-width="1" />
<line x1="1507.5" y1="147.8" x2="1507.5" y2="154.5" stroke="#d6d6d6" stroke-width="1" />
<line x1="1514.5" y1="142.8" x2="1514.5" y2="154.5" stroke="#d6d6d6" stroke-width="1" />
<line x1="1521.5" y1="147.8" x2="1521.5" y2="154.5" stroke="#d6d6d6" stroke-width="1" />
<line x1="1528.5" y1="147.8" x2="1528.5" y2="154.5" stroke="#d6d6d6" stroke-width="1" />
<line x1="1535.5" y1="147.8" x2="1535.5" y2="154.5" stroke="#d6d6d6" stroke-width="1" />
<line x1="1542.5" y1="147.8" x2="1542.5" y2="154.5" stroke="#d6d6d6" stroke-width="1" />
<line x1="1549.5" y1="131.8" x2="1549.5" y2="154.5" stroke="#d6d6d6" stroke-width="1" />
<text x="1552" y="144.6" font-size="14.5" fill="#dcdcdc" textLength="30.4" lengthAdjust="spacingAndGlyphs" >1750</text>
<line x1="1556.5" y1="147.8" x2="1556.5" y2="154.5" stroke="#d6d6d6" stroke-width="1" />
<line x1="1563.5" y1="147.8" x2="1563.5" y2="154.5" stroke="#d6d6d6" stroke-width="1" />
<line x1="1570.5" y1="147.8" x2="1570.5" y2="154.5" stroke="#d6d6d6" stroke-width="1" />
<line x1="1577.5" y1="147.8" x2="1577.5" y2="154.5" stroke="#d6d6d6" stroke-width="1" />
<line x1="1584.5" y1="142.8" x2="1584.5" y2="154.5" stroke="#d6d6d6" stroke-width="1" />
<line x1="1591.5" y1="147.8" x2="1591.5" y2="154.5" stroke="#d6d6d6" stroke-width="1" />
<line x1="1598.5" y1="147.8" x2="1598.5" y2="154.5" stroke="#d6d6d6" stroke-width="1" />
<line x1="1605.5" y1="147.8" x2="1605.5" y2="154.5" stroke="#d6d6d6" stroke-width="1" />
<line x1="1612.5" y1="147.8" x2="1612.5" y2="154.5" stroke="#d6d6d6" stroke-width="1" />
<line x1="1619.5" y1="131.8" x2="1619.5" y2="154.5" stroke="#d6d6d6" stroke-width="1" />
<text x="1622" y="144.6" font-size="14.5" fill="#dcdcdc" textLength="30.4" lengthAdjust="spacingAndGlyphs" >2000</text>
<line x1="1626.5" y1="147.8" x2="1626.5" y2="154.5" stroke="#d6d6d6" stroke-width="1" />
<line x1="1633.5" y1="147.8" x2="1633.5" y2="154.5" stroke="#d6d6d6" stroke-width="1" />
<line x1="1640.5" y1="147.8" x2="1640.5" y2="154.5" stroke="#d6d6d6" stroke-width="1" />
<line x1="1647.5" y1="147.8" x2="1647.5" y2="154.5" stroke="#d6d6d6" stroke-width="1" />
<line x1="1654.5" y1="142.8" x2="1654.5" y2="154.5" stroke="#d6d6d6" stroke-width="1" />
<line x1="1661.5" y1="147.8" x2="1661.5" y2="154.5" stroke="#d6d6d6" stroke-width="1" />
<line x1="1668.5" y1="147.8" x2="1668.5" y2="154.5" stroke="#d6d6d6" stroke-width="1" />
<line x1="1676.5" y1="147.8" x2="1676.5" y2="154.5" stroke="#d6d6d6" stroke-width="1" />
<line x1="1683.5" y1="147.8" x2="1683.5" y2="154.5" stroke="#d6d6d6" stroke-width="1" />
<line x1="1690.5" y1="131.8" x2="1690.5" y2="154.5" stroke="#d6d6d6" stroke-width="1" />
<text x="1693" y="144.6" font-size="14.5" fill="#dcdcdc" textLength="30.4" lengthAdjust="spacingAndGlyphs" >2250</text>
<line x1="1697.5" y1="147.8" x2="1697.5" y2="154.5" stroke="#d6d6d6" stroke-width="1" />
<line x1="1704.5" y1="147.8" x2="1704.5" y2="154.5" stroke="#d6d6d6" stroke-width="1" />
<line x1="1711.5" y1="147.8" x2="1711.5" y2="154.5" stroke="#d6d6d6" stroke-width="1" />
<line x1="1718.5" y1="147.8" x2="1718.5" y2="154.5" stroke="#d6d6d6" stroke-width="1" />
<line x1="1725.5" y1="142.8" x2="1725.5" y2="154.5" stroke="#d6d6d6" stroke-width="1" />
<line x1="1732.5" y1="147.8" x2="1732.5" y2="154.5" stroke="#d6d6d6" stroke-width="1" />
<line x1="1739.5" y1="147.8" x2="1739.5" y2="154.5" stroke="#d6d6d6" stroke-width="1" />
<line x1="1746.5" y1="147.8" x2="1746.5" y2="154.5" stroke="#d6d6d6" stroke-width="1" />
<line x1="1753.5" y1="147.8" x2="1753.5" y2="154.5" stroke="#d6d6d6" stroke-width="1" />
<line x1="1760.5" y1="131.8" x2="1760.5" y2="154.5" stroke="#d6d6d6" stroke-width="1" />
<text x="1763" y="144.6" font-size="14.5" fill="#dcdcdc" textLength="30.4" lengthAdjust="spacingAndGlyphs" >2500</text>
<line x1="1767.5" y1="147.8" x2="1767.5" y2="154.5" stroke="#d6d6d6" stroke-width="1" />
<line x1="1774.5" y1="147.8" x2="1774.5" y2="154.5" stroke="#d6d6d6" stroke-width="1" />
<line x1="1781.5" y1="147.8" x2="1781.5" y2="154.5" stroke="#d6d6d6" stroke-width="1" />
<line x1="1788.5" y1="147.8" x2="1788.5" y2="154.5" stroke="#d6d6d6" stroke-width="1" />
<line x1="1795.5" y1="142.8" x2="1795.5" y2="154.5" stroke="#d6d6d6" stroke-width="1" />
<line x1="1802.5" y1="147.8" x2="1802.5" y2="154.5" stroke="#d6d6d6" stroke-width="1" />
<line x1="1809.5" y1="147.8" x2="1809.5" y2="154.5" stroke="#d6d6d6" stroke-width="1" />
<line x1="1816.5" y1="147.8" x2="1816.5" y2="154.5" stroke="#d6d6d6" stroke-width="1" />
<line x1="1823.5" y1="147.8" x2="1823.5" y2="154.5" stroke="#d6d6d6" stroke-width="1" />
<line x1="1830.5" y1="131.8" x2="1830.5" y2="154.5" stroke="#d6d6d6" stroke-width="1" />
<text x="1833" y="144.6" font-size="14.5" fill="#dcdcdc" textLength="30.4" lengthAdjust="spacingAndGlyphs" >2750</text>
<line x1="1837.5" y1="147.8" x2="1837.5" y2="154.5" stroke="#d6d6d6" stroke-width="1" />
<line x1="1844.5" y1="147.8" x2="1844.5" y2="154.5" stroke="#d6d6d6" stroke-width="1" />
<line x1="1852.5" y1="147.8" x2="1852.5" y2="154.5" stroke="#d6d6d6" stroke-width="1" />
<line x1="1859.5" y1="147.8" x2="1859.5" y2="154.5" stroke="#d6d6d6" stroke-width="1" />
<line x1="1866.5" y1="142.8" x2="1866.5" y2="154.5" stroke="#d6d6d6" stroke-width="1" />
<line x1="1873.5" y1="147.8" x2="1873.5" y2="154.5" stroke="#d6d6d6" stroke-width="1" />
<line x1="1880.5" y1="147.8" x2="1880.5" y2="154.5" stroke="#d6d6d6" stroke-width="1" />
<line x1="1887.5" y1="147.8" x2="1887.5" y2="154.5" stroke="#d6d6d6" stroke-width="1" />
<clipPath id="vr987"><rect x="987" y="154.5" width="29" height="746.5"/></clipPath><g clip-path="url(#vr987)">
<rect x="987" y="154.5" width="29" height="746.5" fill="#333333" />
<rect x="987" y="254.5" width="29" height="639.7" fill="#1e1f1f" />
<line x1="1010" y1="156.5" x2="1016" y2="156.5" stroke="#d6d6d6" stroke-width="1" />
<line x1="1010" y1="163.5" x2="1016" y2="163.5" stroke="#d6d6d6" stroke-width="1" />
<line x1="1010" y1="170.5" x2="1016" y2="170.5" stroke="#d6d6d6" stroke-width="1" />
<line x1="1010" y1="177.5" x2="1016" y2="177.5" stroke="#d6d6d6" stroke-width="1" />
<line x1="994" y1="184.5" x2="1016" y2="184.5" stroke="#d6d6d6" stroke-width="1" />
<text transform="translate(1007.3,187.0) rotate(-90)" text-anchor="end" font-size="14.5" fill="#dcdcdc" textLength="26.700000000000003" lengthAdjust="spacingAndGlyphs">-250</text>
<line x1="1010" y1="191.5" x2="1016" y2="191.5" stroke="#d6d6d6" stroke-width="1" />
<line x1="1010" y1="198.5" x2="1016" y2="198.5" stroke="#d6d6d6" stroke-width="1" />
<line x1="1010" y1="205.5" x2="1016" y2="205.5" stroke="#d6d6d6" stroke-width="1" />
<line x1="1010" y1="212.5" x2="1016" y2="212.5" stroke="#d6d6d6" stroke-width="1" />
<line x1="1005" y1="219.5" x2="1016" y2="219.5" stroke="#d6d6d6" stroke-width="1" />
<line x1="1010" y1="226.5" x2="1016" y2="226.5" stroke="#d6d6d6" stroke-width="1" />
<line x1="1010" y1="233.5" x2="1016" y2="233.5" stroke="#d6d6d6" stroke-width="1" />
<line x1="1010" y1="240.5" x2="1016" y2="240.5" stroke="#d6d6d6" stroke-width="1" />
<line x1="1010" y1="247.5" x2="1016" y2="247.5" stroke="#d6d6d6" stroke-width="1" />
<line x1="994" y1="254.5" x2="1016" y2="254.5" stroke="#d6d6d6" stroke-width="1" />
<text transform="translate(1007.3,257.0) rotate(-90)" text-anchor="end" font-size="14.5" fill="#dcdcdc" textLength="7.4" lengthAdjust="spacingAndGlyphs">0</text>
<line x1="1010" y1="262.5" x2="1016" y2="262.5" stroke="#d6d6d6" stroke-width="1" />
<line x1="1010" y1="269.5" x2="1016" y2="269.5" stroke="#d6d6d6" stroke-width="1" />
<line x1="1010" y1="276.5" x2="1016" y2="276.5" stroke="#d6d6d6" stroke-width="1" />
<line x1="1010" y1="283.5" x2="1016" y2="283.5" stroke="#d6d6d6" stroke-width="1" />
<line x1="1005" y1="290.5" x2="1016" y2="290.5" stroke="#d6d6d6" stroke-width="1" />
<line x1="1010" y1="297.5" x2="1016" y2="297.5" stroke="#d6d6d6" stroke-width="1" />
<line x1="1010" y1="304.5" x2="1016" y2="304.5" stroke="#d6d6d6" stroke-width="1" />
<line x1="1010" y1="311.5" x2="1016" y2="311.5" stroke="#d6d6d6" stroke-width="1" />
<line x1="1010" y1="318.5" x2="1016" y2="318.5" stroke="#d6d6d6" stroke-width="1" />
<line x1="994" y1="325.5" x2="1016" y2="325.5" stroke="#d6d6d6" stroke-width="1" />
<text transform="translate(1007.3,328.0) rotate(-90)" text-anchor="end" font-size="14.5" fill="#dcdcdc" textLength="22.200000000000003" lengthAdjust="spacingAndGlyphs">250</text>
<line x1="1010" y1="332.5" x2="1016" y2="332.5" stroke="#d6d6d6" stroke-width="1" />
<line x1="1010" y1="339.5" x2="1016" y2="339.5" stroke="#d6d6d6" stroke-width="1" />
<line x1="1010" y1="346.5" x2="1016" y2="346.5" stroke="#d6d6d6" stroke-width="1" />
<line x1="1010" y1="353.5" x2="1016" y2="353.5" stroke="#d6d6d6" stroke-width="1" />
<line x1="1005" y1="360.5" x2="1016" y2="360.5" stroke="#d6d6d6" stroke-width="1" />
<line x1="1010" y1="367.5" x2="1016" y2="367.5" stroke="#d6d6d6" stroke-width="1" />
<line x1="1010" y1="374.5" x2="1016" y2="374.5" stroke="#d6d6d6" stroke-width="1" />
<line x1="1010" y1="381.5" x2="1016" y2="381.5" stroke="#d6d6d6" stroke-width="1" />
<line x1="1010" y1="388.5" x2="1016" y2="388.5" stroke="#d6d6d6" stroke-width="1" />
<line x1="994" y1="395.5" x2="1016" y2="395.5" stroke="#d6d6d6" stroke-width="1" />
<text transform="translate(1007.3,398.0) rotate(-90)" text-anchor="end" font-size="14.5" fill="#dcdcdc" textLength="22.200000000000003" lengthAdjust="spacingAndGlyphs">500</text>
<line x1="1010" y1="402.5" x2="1016" y2="402.5" stroke="#d6d6d6" stroke-width="1" />
<line x1="1010" y1="409.5" x2="1016" y2="409.5" stroke="#d6d6d6" stroke-width="1" />
<line x1="1010" y1="416.5" x2="1016" y2="416.5" stroke="#d6d6d6" stroke-width="1" />
<line x1="1010" y1="423.5" x2="1016" y2="423.5" stroke="#d6d6d6" stroke-width="1" />
<line x1="1005" y1="430.5" x2="1016" y2="430.5" stroke="#d6d6d6" stroke-width="1" />
<line x1="1010" y1="438.5" x2="1016" y2="438.5" stroke="#d6d6d6" stroke-width="1" />
<line x1="1010" y1="445.5" x2="1016" y2="445.5" stroke="#d6d6d6" stroke-width="1" />
<line x1="1010" y1="452.5" x2="1016" y2="452.5" stroke="#d6d6d6" stroke-width="1" />
<line x1="1010" y1="459.5" x2="1016" y2="459.5" stroke="#d6d6d6" stroke-width="1" />
<line x1="994" y1="466.5" x2="1016" y2="466.5" stroke="#d6d6d6" stroke-width="1" />
<text transform="translate(1007.3,469.0) rotate(-90)" text-anchor="end" font-size="14.5" fill="#dcdcdc" textLength="22.200000000000003" lengthAdjust="spacingAndGlyphs">750</text>
<line x1="1010" y1="473.5" x2="1016" y2="473.5" stroke="#d6d6d6" stroke-width="1" />
<line x1="1010" y1="480.5" x2="1016" y2="480.5" stroke="#d6d6d6" stroke-width="1" />
<line x1="1010" y1="487.5" x2="1016" y2="487.5" stroke="#d6d6d6" stroke-width="1" />
<line x1="1010" y1="494.5" x2="1016" y2="494.5" stroke="#d6d6d6" stroke-width="1" />
<line x1="1005" y1="501.5" x2="1016" y2="501.5" stroke="#d6d6d6" stroke-width="1" />
<line x1="1010" y1="508.5" x2="1016" y2="508.5" stroke="#d6d6d6" stroke-width="1" />
<line x1="1010" y1="515.5" x2="1016" y2="515.5" stroke="#d6d6d6" stroke-width="1" />
<line x1="1010" y1="522.5" x2="1016" y2="522.5" stroke="#d6d6d6" stroke-width="1" />
<line x1="1010" y1="529.5" x2="1016" y2="529.5" stroke="#d6d6d6" stroke-width="1" />
<line x1="994" y1="536.5" x2="1016" y2="536.5" stroke="#d6d6d6" stroke-width="1" />
<text transform="translate(1007.3,539.0) rotate(-90)" text-anchor="end" font-size="14.5" fill="#dcdcdc" textLength="29.6" lengthAdjust="spacingAndGlyphs">1000</text>
<line x1="1010" y1="543.5" x2="1016" y2="543.5" stroke="#d6d6d6" stroke-width="1" />
<line x1="1010" y1="550.5" x2="1016" y2="550.5" stroke="#d6d6d6" stroke-width="1" />
<line x1="1010" y1="557.5" x2="1016" y2="557.5" stroke="#d6d6d6" stroke-width="1" />
<line x1="1010" y1="564.5" x2="1016" y2="564.5" stroke="#d6d6d6" stroke-width="1" />
<line x1="1005" y1="571.5" x2="1016" y2="571.5" stroke="#d6d6d6" stroke-width="1" />
<line x1="1010" y1="578.5" x2="1016" y2="578.5" stroke="#d6d6d6" stroke-width="1" />
<line x1="1010" y1="585.5" x2="1016" y2="585.5" stroke="#d6d6d6" stroke-width="1" />
<line x1="1010" y1="592.5" x2="1016" y2="592.5" stroke="#d6d6d6" stroke-width="1" />
<line x1="1010" y1="599.5" x2="1016" y2="599.5" stroke="#d6d6d6" stroke-width="1" />
<line x1="994" y1="606.5" x2="1016" y2="606.5" stroke="#d6d6d6" stroke-width="1" />
<text transform="translate(1007.3,609.0) rotate(-90)" text-anchor="end" font-size="14.5" fill="#dcdcdc" textLength="29.6" lengthAdjust="spacingAndGlyphs">1250</text>
<line x1="1010" y1="614.5" x2="1016" y2="614.5" stroke="#d6d6d6" stroke-width="1" />
<line x1="1010" y1="621.5" x2="1016" y2="621.5" stroke="#d6d6d6" stroke-width="1" />
<line x1="1010" y1="628.5" x2="1016" y2="628.5" stroke="#d6d6d6" stroke-width="1" />
<line x1="1010" y1="635.5" x2="1016" y2="635.5" stroke="#d6d6d6" stroke-width="1" />
<line x1="1005" y1="642.5" x2="1016" y2="642.5" stroke="#d6d6d6" stroke-width="1" />
<line x1="1010" y1="649.5" x2="1016" y2="649.5" stroke="#d6d6d6" stroke-width="1" />
<line x1="1010" y1="656.5" x2="1016" y2="656.5" stroke="#d6d6d6" stroke-width="1" />
<line x1="1010" y1="663.5" x2="1016" y2="663.5" stroke="#d6d6d6" stroke-width="1" />
<line x1="1010" y1="670.5" x2="1016" y2="670.5" stroke="#d6d6d6" stroke-width="1" />
<line x1="994" y1="677.5" x2="1016" y2="677.5" stroke="#d6d6d6" stroke-width="1" />
<text transform="translate(1007.3,680.0) rotate(-90)" text-anchor="end" font-size="14.5" fill="#dcdcdc" textLength="29.6" lengthAdjust="spacingAndGlyphs">1500</text>
<line x1="1010" y1="684.5" x2="1016" y2="684.5" stroke="#d6d6d6" stroke-width="1" />
<line x1="1010" y1="691.5" x2="1016" y2="691.5" stroke="#d6d6d6" stroke-width="1" />
<line x1="1010" y1="698.5" x2="1016" y2="698.5" stroke="#d6d6d6" stroke-width="1" />
<line x1="1010" y1="705.5" x2="1016" y2="705.5" stroke="#d6d6d6" stroke-width="1" />
<line x1="1005" y1="712.5" x2="1016" y2="712.5" stroke="#d6d6d6" stroke-width="1" />
<line x1="1010" y1="719.5" x2="1016" y2="719.5" stroke="#d6d6d6" stroke-width="1" />
<line x1="1010" y1="726.5" x2="1016" y2="726.5" stroke="#d6d6d6" stroke-width="1" />
<line x1="1010" y1="733.5" x2="1016" y2="733.5" stroke="#d6d6d6" stroke-width="1" />
<line x1="1010" y1="740.5" x2="1016" y2="740.5" stroke="#d6d6d6" stroke-width="1" />
<line x1="994" y1="747.5" x2="1016" y2="747.5" stroke="#d6d6d6" stroke-width="1" />
<text transform="translate(1007.3,750.0) rotate(-90)" text-anchor="end" font-size="14.5" fill="#dcdcdc" textLength="29.6" lengthAdjust="spacingAndGlyphs">1750</text>
<line x1="1010" y1="754.5" x2="1016" y2="754.5" stroke="#d6d6d6" stroke-width="1" />
<line x1="1010" y1="761.5" x2="1016" y2="761.5" stroke="#d6d6d6" stroke-width="1" />
<line x1="1010" y1="768.5" x2="1016" y2="768.5" stroke="#d6d6d6" stroke-width="1" />
<line x1="1010" y1="775.5" x2="1016" y2="775.5" stroke="#d6d6d6" stroke-width="1" />
<line x1="1005" y1="782.5" x2="1016" y2="782.5" stroke="#d6d6d6" stroke-width="1" />
<line x1="1010" y1="790.5" x2="1016" y2="790.5" stroke="#d6d6d6" stroke-width="1" />
<line x1="1010" y1="797.5" x2="1016" y2="797.5" stroke="#d6d6d6" stroke-width="1" />
<line x1="1010" y1="804.5" x2="1016" y2="804.5" stroke="#d6d6d6" stroke-width="1" />
<line x1="1010" y1="811.5" x2="1016" y2="811.5" stroke="#d6d6d6" stroke-width="1" />
<line x1="994" y1="818.5" x2="1016" y2="818.5" stroke="#d6d6d6" stroke-width="1" />
<text transform="translate(1007.3,821.0) rotate(-90)" text-anchor="end" font-size="14.5" fill="#dcdcdc" textLength="29.6" lengthAdjust="spacingAndGlyphs">2000</text>
<line x1="1010" y1="825.5" x2="1016" y2="825.5" stroke="#d6d6d6" stroke-width="1" />
<line x1="1010" y1="832.5" x2="1016" y2="832.5" stroke="#d6d6d6" stroke-width="1" />
<line x1="1010" y1="839.5" x2="1016" y2="839.5" stroke="#d6d6d6" stroke-width="1" />
<line x1="1010" y1="846.5" x2="1016" y2="846.5" stroke="#d6d6d6" stroke-width="1" />
<line x1="1005" y1="853.5" x2="1016" y2="853.5" stroke="#d6d6d6" stroke-width="1" />
<line x1="1010" y1="860.5" x2="1016" y2="860.5" stroke="#d6d6d6" stroke-width="1" />
<line x1="1010" y1="867.5" x2="1016" y2="867.5" stroke="#d6d6d6" stroke-width="1" />
<line x1="1010" y1="874.5" x2="1016" y2="874.5" stroke="#d6d6d6" stroke-width="1" />
<line x1="1010" y1="881.5" x2="1016" y2="881.5" stroke="#d6d6d6" stroke-width="1" />
<line x1="994" y1="888.5" x2="1016" y2="888.5" stroke="#d6d6d6" stroke-width="1" />
<text transform="translate(1007.3,891.0) rotate(-90)" text-anchor="end" font-size="14.5" fill="#dcdcdc" textLength="29.6" lengthAdjust="spacingAndGlyphs">2250</text>
<line x1="1010" y1="895.5" x2="1016" y2="895.5" stroke="#d6d6d6" stroke-width="1" />
</g>
<line x1="65" y1="154.5" x2="861" y2="154.5" stroke="#ececec" stroke-width="1" />
<line x1="64.5" y1="155" x2="64.5" y2="901" stroke="#ececec" stroke-width="1" />
<line x1="1016" y1="154.5" x2="1888" y2="154.5" stroke="#ececec" stroke-width="1" />
<line x1="1015.5" y1="155" x2="1015.5" y2="901" stroke="#ececec" stroke-width="1" />
<line x1="437" y1="146" x2="473" y2="146" stroke="#1e90d8" stroke-width="2" />
<circle cx="437" cy="146" r="2.8" fill="#1e1f1f" stroke="#1e90d8" stroke-width="1.6"/><circle cx="473" cy="146" r="2.8" fill="#1e1f1f" stroke="#1e90d8" stroke-width="1.6"/>
<path d="M575,150 L585,150 L580,154.5 Z" fill="#e8e8e8" stroke="none" stroke-width="1" />
<circle cx="57" cy="517.7" r="2.8" fill="#1e1f1f" stroke="#1e90d8" stroke-width="2"/>
<line x1="1197" y1="146" x2="1613" y2="146" stroke="#1e90d8" stroke-width="2" />
<circle cx="1197" cy="146" r="3" fill="#1e1f1f" stroke="#1e90d8" stroke-width="1.6"/><circle cx="1613" cy="146" r="3" fill="#1e1f1f" stroke="#1e90d8" stroke-width="1.6"/>
<path d="M1064,150 L1074,150 L1069,154.5 Z" fill="#e8e8e8" stroke="none" stroke-width="1" />
<line x1="1007.8" y1="443" x2="1007.8" y2="663.5" stroke="#1e90d8" stroke-width="2" />
<circle cx="1007.8" cy="443" r="3" fill="#1e1f1f" stroke="#1e90d8" stroke-width="1.6"/><circle cx="1007.8" cy="663.5" r="3" fill="#1e1f1f" stroke="#1e90d8" stroke-width="1.6"/>
<path d="M1012,659 L1012,669 L1016,664 Z" fill="#e8e8e8" stroke="none" stroke-width="1" />
<rect x="65" y="155" width="796" height="746" fill="#d2d2d2" />
<rect x="1016" y="155" width="872" height="746" fill="#d2d2d2" />
<defs><linearGradient id="shL" x1="0" y1="0" x2="0" y2="1"><stop offset="0" stop-color="#707070"/><stop offset="0.35" stop-color="#8a8a8a"/><stop offset="1" stop-color="#d2d2d2"/></linearGradient></defs>
<rect x="117" y="753" width="744" height="5" fill="url(#shL)" />
<rect x="116.6" y="241" width="1" height="512" fill="#a8a8a8" />
<rect x="117.6" y="240" width="743.5" height="513" fill="#ffffff" />
<defs><linearGradient id="shR" x1="0" y1="0" x2="0" y2="1"><stop offset="0" stop-color="#8a8a8a"/><stop offset="0.5" stop-color="#b4b4b4"/><stop offset="1" stop-color="#d2d2d2"/></linearGradient></defs>
<rect x="1058" y="894.2" width="830" height="6.3" fill="url(#shR)" />
<rect x="1056" y="256" width="1.5" height="638" fill="#9a9a9a" />
<rect x="1057" y="255.6" width="831" height="638.6" fill="#ffffff" />
<rect x="1056" y="239" width="14.5" height="16.6" fill="#4a4a4a" rx="1.5"/>
<text x="1060.5" y="252" font-size="9.5" fill="#e0e0e0" >1</text>
<defs><clipPath id="cL"><rect x="65" y="154.5" width="796" height="746.5"/></clipPath><clipPath id="cR"><rect x="1016" y="154.5" width="872" height="746.5"/></clipPath></defs>
<g clip-path="url(#cL)"><g fill="none" stroke="#2222ff" stroke-width="1.15" stroke-linejoin="round"><g transform="translate(0,0)"><path d="M330.6,387 L318.8,384.2 L308,386.6 L291.6,392.7 L279.4,405.8 L278,410.5 L268.2,418.5 L243.8,434.9 L246.1,440.5 L252.2,446.2 L303,452.4 L317.3,482.7 L319.7,511.2 L327.2,532.9 L349.5,552.7 L364.3,558.3 L386.6,560.2 L442.4,559.5 L502.6,547.4 L530.1,549.6 L559.7,545.5 L573.9,531.7 L575.5,518.4 L544.7,517.5 L544.7,532.5 L539.3,532.5 L539.3,517.9 L486.5,517.5 L486.5,535.4 L481.3,535.4 L481.3,517.9 L425.7,517.4 L425.7,539.1 L420.1,539.1 L420.1,517.4 L384.8,517.4 L384.8,459.2 L378.6,453.6 L378.6,505 L373.3,505 L373.3,449.4 L368.6,444.8 L355.4,411 L349.8,399.7 L342.3,391.3 L335.7,388.9 L335.7,463.1 L330.6,463.1 Z"/><path d="M330.8,564.3 L313,563.3 L307.8,564.4 L290.4,572.9 L280.6,583.7 L279.2,587.9 L272.1,593.1 L251,602.9 L240.2,610.2 L246.8,617 L254.3,625.9 L277.3,625.9 L288.6,626.4 L304.9,631.8 L316.6,657.2 L321,695.6 L334.6,718.5 L346.4,729.6 L361.9,735.8 L399,737.1 L407.7,739.5 L436.2,739.5 L490,731.3 L508,726.3 L528.4,727.1 L560.5,724.2 L570.1,713.4 L573.9,711.7 L575.5,695.7 L545.1,695.4 L545.1,710.4 L539.7,710.4 L539.7,696 L486.7,695.4 L486.7,714.2 L481.3,714.2 L481.3,696 L425.7,695.6 L425.7,717.2 L420.1,717.2 L420.1,695.6 L385.4,695.6 L385.4,640.4 L378.6,633.4 L378.6,683.2 L373.6,683.2 L373.6,626.8 L363.2,611.4 L351,579 L336.4,566.1 L336.4,640.4 L330.8,640.4 Z"/><path d="M184.6,407.6 L204,409.3 L225.9,421.1 L240.2,456.4 L240.7,464.9 L237.4,464.9 L236.4,477.5 L233.5,476.7 L229.3,468.2 L225.1,474.1 L221.5,484.2 L217.5,484.2 L217.5,553.3 L211.6,559.2 L207.4,559.2 L207.4,484.2 L201.5,484.2 L201.5,560 L190.5,560 L190.5,484.2 L185.1,484.2 L185.1,559.2 L181.3,558.4 L173.7,550.8 L173.7,484.2 L168.3,484.2 L163.6,468.2 L156,478.3 L156,463.2 L151.8,463.2 L152.1,448.9 L163.6,421.9 Z M222,484.5 L222.5,489.3 M161.1,512 L168.3,508.2 L168.3,545.2 Z M222.2,510.3 L228.4,517.9 L222.5,547.4 Z"/><path d="M144.3,671.9 L141.4,657.5 L147.6,620.5 L170.4,585.1 L188.9,581.4 L207.4,584.3 L220.9,596.1 L226.8,610.4 L236.1,642.4 L236.9,671.9 L235.7,675.2 L235.7,659.2 L231,659.2 L231,704.7 L220.9,737.6 L217.5,737.6 L216.7,662.6 L211.7,662.6 L211.7,732.5 L206.6,721.6 L207.4,710 L205.8,690.4 L201.5,690.4 L201.5,636 L196.5,636 L195.6,689.6 L184.7,689.2 L184.7,636 L179.6,636 L179.6,689.6 L173.7,689.6 L172.1,732.5 L167.3,737.6 L167.3,664.6 L162.3,664.6 L162.3,738.4 L158.6,737.6 L152.7,723.2 L150.2,694.6 L150.2,653.3 L145.1,653.3 L145.1,671.9"/><path d="M161.5,294.2 L168.2,298.2 L180.5,303.4 L182.8,305.2 L182.8,336.3 L188.2,336.3 L188.2,312.3 L194.6,320.3 L199.3,333.5 L198.4,334 L192,368.3 L173.4,364.1 L151.8,340.6 L148.9,322.7 L151.8,304.3 Z"/><path d="M209.2,326.4 L212.5,326.4 L219.6,331.6 L219.6,349.5 L224.3,349.5 L224.7,335.4 L227.6,337.6 L228,340.6 L230.4,341 L237.5,358 L237,359.4 L220.5,367.9 L210.2,357.5 L209.7,332.1 L208.3,330.2 Z"/><path d="M240.8,330 L250.2,338.2 L250.2,352.3 L255.3,352.3 L255.8,343.9 L272.8,360.3 L247.3,367.9 L244,363.2 Z"/><path d="M280.4,315.8 Q310.1,347.1 337.6,317.2 L341.6,328.5 L335,350.7 L334.5,338.4 L329.8,338.4 L329.8,355.8 L323.7,362 L319.4,363.9 L319.4,348.5 L314.3,348.5 L314.3,366.2 L303,367.6 L303,349.3 L297.8,349.3 L297.8,365.3 L291.7,362 L286,354.4 L286,336.5 L280.8,336.5 L280.5,349.3 L278.9,347.8 L275.2,326.2 Z"/><path d="M387.2,387.9 L372.6,378 L351.9,359.6 L349.6,321 L365.6,312.3 L370.3,314.2 L383.5,328.5 L383.5,360.6 L388.6,360.6 L389.1,334.7 L398.5,345 L392.4,386.5"/><path d="M406.8,391.6 L401.1,363.4 L401.4,336.1 L404.9,328.5 L410.5,322.1 Q442.1,364.2 473.6,323.1 L480.7,338.4 L479.3,363.4 L477.4,392.1 L467.5,392.1 L467.5,363.4 L462.6,363.4 L462.3,391.1 L460,384.6 L452.2,374.2 L452.2,357.3 L447.3,357.3 L446.8,369.5 L444,368.5 L436,369.5 L435.5,356.6 L430.6,356.6 L430.3,372.8 L425.1,386.9 L419,391.4 L418.5,363.4 L413.6,363.4 L413.6,394.4"/><path d="M528.5,393 L528.7,371.7 L534.1,371.7 L534.3,391.4 L543.7,388.8 L544.2,365.3 L549.4,365.3 L549.4,385 L558.8,369 L561.6,357.7 L560.2,344.5 L560.7,330.4 L557.4,323.8 Q524.4,379.7 489.6,320.5 L483.3,338.4 L484.2,360.5 L492,379.8 L495.3,382.7 L495.5,362.2 L500.4,362.2 L500.4,386.9 L511.7,393 L512.5,371.7 L517.4,371.7 L517.4,393.5"/><path d="M618.5,298 L605.3,297.1 L583.4,305.5 L581.2,329.3 L585.3,339.6 L594.3,345.4 L605.9,344.8 L613.6,364.1 L623.3,380.8 L618.2,392.4 L619.6,414.3 L618.3,424 L630.3,444.6 L642.5,449.8 L650.2,457.9 L652.8,472.3 L659.3,487.1 L657.3,496.1 L636.7,508.4 L639.9,516.1 L658,516.1 L676.7,495.5 L677.3,486.5 L677.3,454.3 L687.6,453.4 L713.4,455.3 L739.1,451 L760.6,443.3 L792.8,437.3 L805.7,443.7 L808.3,448.5 L831.5,473 L852.7,485.2 L842.4,503.9 L834.1,509.7 L831.7,514.6 L837.9,515.9 L849.5,515.1 L875,485 L870,440 L862,427 L880,420 L856.6,408.5 L832.5,408.5 L832.5,440.4 L827.6,440.4 L827.6,409.4 L774.5,408.5 L774.5,425.3 L769,425.3 L769,409.4 L713.4,408.9 L713.4,432.4 L707.6,432.4 L707.6,409.2 L672.4,408.5 L672.6,367.3 L666.5,363.4 L666.3,436 L660.5,436 L660.7,360.9 L645.2,353.8 L642.6,347.3 L638.1,344.1 L649.7,339 L633.6,309.3 L623.7,300 L623.7,364.5 L618.5,364.5 Z"/><path d="M618.7,519.7 L608,518.8 L581.6,529.3 L578.4,540.3 L579.3,558.3 L584.8,564.1 L602.2,572.1 L622.2,601.5 L622.8,605.3 L616.4,627.2 L616.5,627.7 L619.3,651.6 L630.3,663.8 L634.1,670.9 L649.6,676.7 L654.8,683.4 L656.4,699.2 L660.5,708.9 L656,720.2 L638.6,730.1 L638.4,736.6 L640.6,739.2 L652.2,739.2 L676,718.6 L679.2,708.9 L679.6,678.6 L703.1,681.2 L718.5,679.9 L764.5,666.6 L785.1,663.2 L805.7,667.7 L825,689.6 L853.4,707 L843.1,728.9 L834.1,734.7 L833.4,738.3 L848.9,738.3 L875,710 L880,635.5 L833.4,635.5 L833.4,664.5 L827.9,664.5 L827.9,635.5 L774.8,635.5 L774.8,650.7 L769.4,650.7 L769.4,635.5 L713.6,635.5 L713.6,658.4 L708.2,658.4 L708.2,635.5 L673.2,635.5 L673.1,590.5 L666.6,586 L666.7,656.7 L661.2,656.7 L661.5,582.4 L644.7,572.5 L640.2,562.2 L648.6,557 L632.5,535.8 L629.3,526.7 L624.4,522.2 L624.4,587.9 L618.7,587.9 Z"/></g></g><path d="M 304.30,434.29 L 304.30,426.75 L 317.90,434.29 L 317.90,426.75 M 311.78,423.36 L 311.78,418.34 M 306.34,414.70 Q 304.30,413.70 304.30,411.18 Q 304.30,407.66 307.56,407.66 Q 310.69,407.66 310.69,411.43 Q 310.69,407.41 314.36,407.41 Q 317.90,407.41 317.90,411.18 Q 317.90,413.95 315.86,414.95 M 328.75,471.23 L 328.75,475.40 L 332.94,475.73 Q 332.19,474.65 332.19,473.40 Q 332.19,470.90 335.17,470.90 Q 338.05,470.90 338.05,473.40 Q 338.05,475.07 336.84,475.90 M 380.00,513.75 L 371.00,513.75 L 377.30,517.50 L 377.30,512.50 M 419.31,551.10 Q 417.90,550.50 417.90,549.00 Q 417.90,546.90 420.16,546.90 Q 422.32,546.90 422.32,549.15 Q 422.32,546.75 424.86,546.75 Q 427.30,546.75 427.30,549.00 Q 427.30,550.65 425.89,551.25 M 481.40,547.83 Q 479.00,547.58 479.00,545.50 Q 479.00,543.17 481.59,543.17 Q 483.32,543.17 485.24,545.50 L 488.60,548.00 L 488.60,543.00 M 539.88,543.49 L 538.05,542.39 L 546.35,542.39 M 343.90,675.96 L 343.90,668.24 L 356.90,675.96 L 356.90,668.24 M 351.05,664.77 L 351.05,659.63 M 356.90,650.37 L 343.90,650.37 L 353.00,656.16 L 353.00,648.44 M 328.70,648.83 L 328.70,653.00 L 332.93,653.33 Q 332.18,652.25 332.18,651.00 Q 332.18,648.50 335.19,648.50 Q 338.10,648.50 338.10,651.00 Q 338.10,652.67 336.88,653.50 M 380.50,692.45 L 371.50,692.45 L 377.80,696.20 L 377.80,691.20 M 419.91,729.90 Q 418.50,729.30 418.50,727.80 Q 418.50,725.70 420.76,725.70 Q 422.92,725.70 422.92,727.95 Q 422.92,725.55 425.46,725.55 Q 427.90,725.55 427.90,727.80 Q 427.90,729.45 426.49,730.05 M 481.80,726.53 Q 479.40,726.28 479.40,724.20 Q 479.40,721.87 481.99,721.87 Q 483.72,721.87 485.64,724.20 L 489.00,726.70 L 489.00,721.70 M 539.88,720.99 L 538.05,719.89 L 546.35,719.89 M 183.85,467.54 L 192.80,462.17 L 183.85,456.80 M 192.80,462.17 L 201.75,462.17 M 193.70,451.98 L 193.70,444.82 M 183.85,429.98 L 183.85,438.93 L 191.91,439.64 Q 190.47,437.32 190.47,434.63 Q 190.47,429.26 196.20,429.26 Q 201.75,429.26 201.75,434.63 Q 201.75,438.21 199.42,440.00 M 191.60,472.75 L 184.40,472.75 L 189.44,476.50 L 189.44,471.50 M 200.92,476.10 Q 199.60,475.50 199.60,474.00 Q 199.60,471.90 201.71,471.90 Q 203.74,471.90 203.74,474.15 Q 203.74,471.75 206.11,471.75 Q 208.40,471.75 208.40,474.00 Q 208.40,475.65 207.08,476.25 M 168.50,476.53 L 168.50,479.36 L 170.93,479.59 Q 170.50,478.85 170.50,478.00 Q 170.50,476.30 172.23,476.30 Q 173.90,476.30 173.90,478.00 Q 173.90,479.13 173.20,479.70 M 218.25,479.82 Q 216.90,479.62 216.90,478.00 Q 216.90,476.18 218.36,476.18 Q 219.33,476.18 220.41,478.00 L 222.30,479.95 L 222.30,476.05 M 154.00,456.08 Q 153.50,456.65 153.50,457.50 Q 153.50,459.09 156.25,459.09 L 157.00,459.09 Q 158.50,459.09 158.50,457.50 Q 158.50,455.80 157.00,455.80 Q 155.60,455.80 155.60,457.50 Q 155.60,459.09 156.75,459.09 M 237.80,463.10 L 237.25,462.43 L 239.75,462.43 M 186.40,626.95 L 192.30,623.23 L 186.40,619.52 M 192.30,623.23 L 198.20,623.23 M 192.89,616.18 L 192.89,611.22 M 198.20,602.31 L 186.40,602.31 L 194.66,607.88 L 194.66,600.45 M 181.95,624.00 L 174.45,624.00 L 179.70,627.00 L 179.70,623.00 M 195.70,626.87 Q 194.50,626.33 194.50,625.00 Q 194.50,623.13 196.42,623.13 Q 198.26,623.13 198.26,625.13 Q 198.26,623.00 200.42,623.00 Q 202.50,623.00 202.50,625.00 Q 202.50,626.47 201.30,627.00 M 147.10,645.54 Q 146.55,646.12 146.55,647.00 Q 146.55,648.63 149.58,648.63 L 150.40,648.63 Q 152.05,648.63 152.05,647.00 Q 152.05,645.25 150.40,645.25 Q 148.86,645.25 148.86,647.00 Q 148.86,648.63 150.12,648.63 M 160.80,651.05 L 160.80,654.80 L 164.85,655.10 Q 164.13,654.12 164.13,653.00 Q 164.13,650.75 167.01,650.75 Q 169.80,650.75 169.80,653.00 Q 169.80,654.50 168.63,655.25 M 212.07,653.10 Q 209.95,652.88 209.95,651.00 Q 209.95,648.90 212.24,648.90 Q 213.77,648.90 215.47,651.00 L 218.45,653.25 L 218.45,648.75 M 232.10,653.25 L 231.00,652.42 L 236.00,652.42 M 165.90,343.60 L 165.90,338.60 L 176.70,343.60 L 176.70,338.60 M 171.84,336.36 L 171.84,333.04 M 166.98,326.22 Q 165.90,327.05 165.90,328.30 Q 165.90,330.63 171.84,330.63 L 173.46,330.63 Q 176.70,330.63 176.70,328.30 Q 176.70,325.80 173.46,325.80 Q 170.44,325.80 170.44,328.30 Q 170.44,330.63 172.92,330.63 M 171.84,323.56 L 171.84,320.24 M 168.28,317.00 L 165.90,315.33 L 176.70,315.33 M 189.50,346.12 L 181.50,346.12 L 187.10,349.65 L 187.10,344.95 M 212.75,353.39 L 212.75,350.45 L 217.45,353.39 L 217.45,350.45 M 215.34,349.14 L 215.34,347.18 M 213.22,343.18 Q 212.75,343.67 212.75,344.40 Q 212.75,345.77 215.34,345.77 L 216.04,345.77 Q 217.45,345.77 217.45,344.40 Q 217.45,342.93 216.04,342.93 Q 214.72,342.93 214.72,344.40 Q 214.72,345.77 215.81,345.77 M 215.34,341.62 L 215.34,339.66 M 213.92,338.25 Q 212.75,338.10 212.75,336.88 Q 212.75,335.51 214.02,335.51 Q 214.86,335.51 215.81,336.88 L 217.45,338.35 L 217.45,335.41 M 217.30,358.36 L 217.30,362.28 L 221.53,362.59 Q 220.78,361.57 220.78,360.40 Q 220.78,358.05 223.79,358.05 Q 226.70,358.05 226.70,360.40 Q 226.70,361.97 225.48,362.75 M 245.90,356.20 L 245.90,354.44 L 249.70,356.20 L 249.70,354.44 M 247.99,353.65 L 247.99,352.47 M 246.74,351.33 L 245.90,350.74 L 249.70,350.74 M 247.99,349.13 L 247.99,347.95 M 246.85,347.10 Q 245.90,347.01 245.90,346.28 Q 245.90,345.46 246.93,345.46 Q 247.61,345.46 248.37,346.28 L 249.70,347.16 L 249.70,345.40 M 247.80,361.08 L 247.80,364.58 L 252.03,364.86 Q 251.28,363.95 251.28,362.90 Q 251.28,360.80 254.29,360.80 Q 257.20,360.80 257.20,362.90 Q 257.20,364.30 255.98,365.00 M 278.95,325.08 L 278.95,329.16 L 282.95,329.49 Q 282.24,328.43 282.24,327.20 Q 282.24,324.75 285.09,324.75 Q 287.85,324.75 287.85,327.20 Q 287.85,328.83 286.69,329.65 M 330.17,331.59 Q 327.95,331.36 327.95,329.40 Q 327.95,327.21 330.35,327.21 Q 331.95,327.21 333.73,329.40 L 336.85,331.75 L 336.85,327.05 M 303.90,339.27 L 295.90,339.27 L 301.50,342.65 L 301.50,338.15 M 304.80,346.15 L 307.40,344.57 L 304.80,342.98 M 307.40,344.57 L 310.00,344.57 M 307.66,341.56 L 307.66,339.44 M 306.10,337.91 Q 304.80,337.75 304.80,336.43 Q 304.80,334.95 306.20,334.95 Q 307.14,334.95 308.18,336.43 L 310.00,338.02 L 310.00,334.85 M 313.34,339.56 Q 311.85,339.00 311.85,337.60 Q 311.85,335.64 314.23,335.64 Q 316.50,335.64 316.50,337.74 Q 316.50,335.50 319.18,335.50 Q 321.75,335.50 321.75,337.60 Q 321.75,339.14 320.26,339.70 M 359.95,357.87 L 359.95,352.65 L 369.85,357.87 L 369.85,352.65 M 365.39,350.32 L 365.39,346.84 M 362.13,343.46 L 359.95,341.73 L 369.85,341.73 M 365.39,336.96 L 365.39,333.48 M 362.13,330.10 L 359.95,328.37 L 369.85,328.37 M 390.55,369.72 L 382.05,369.72 L 388.00,373.25 L 388.00,368.55 M 407.75,358.87 L 412.20,356.30 L 407.75,353.73 M 412.20,356.30 L 416.65,356.30 M 412.64,351.42 L 412.64,347.98 M 409.71,344.64 L 407.75,342.93 L 416.65,342.93 M 415.65,352.46 L 415.65,356.38 L 417.76,356.69 Q 417.39,355.68 417.39,354.50 Q 417.39,352.15 418.89,352.15 Q 420.35,352.15 420.35,354.50 Q 420.35,356.07 419.74,356.85 M 437.65,345.75 L 428.75,345.75 L 434.98,348.90 L 434.98,344.70 M 446.34,348.59 Q 444.85,347.97 444.85,346.40 Q 444.85,344.21 447.23,344.21 Q 449.50,344.21 449.50,346.56 Q 449.50,344.05 452.18,344.05 Q 454.75,344.05 454.75,346.40 Q 454.75,348.12 453.26,348.75 M 462.60,355.39 Q 460.00,355.16 460.00,353.20 Q 460.00,351.01 462.81,351.01 Q 464.68,351.01 466.76,353.20 L 470.40,355.55 L 470.40,350.85 M 490.85,349.85 L 490.85,354.18 L 495.31,354.53 Q 494.51,353.40 494.51,352.10 Q 494.51,349.50 497.68,349.50 Q 500.75,349.50 500.75,352.10 Q 500.75,353.83 499.46,354.70 M 520.85,369.35 L 523.90,367.40 L 520.85,365.45 M 523.90,367.40 L 526.95,367.40 M 524.20,363.70 L 524.20,361.10 M 521.76,359.22 Q 520.85,358.70 520.85,357.40 Q 520.85,355.58 522.31,355.58 Q 523.72,355.58 523.72,357.53 Q 523.72,355.45 525.36,355.45 Q 526.95,355.45 526.95,357.40 Q 526.95,358.83 526.03,359.35 M 518.80,360.22 L 510.80,360.22 L 516.40,363.75 L 516.40,359.05 M 528.21,362.56 Q 526.80,362.00 526.80,360.60 Q 526.80,358.64 529.06,358.64 Q 531.22,358.64 531.22,360.74 Q 531.22,358.50 533.76,358.50 Q 536.20,358.50 536.20,360.60 Q 536.20,362.14 534.79,362.70 M 544.25,357.09 Q 541.90,356.86 541.90,354.90 Q 541.90,352.71 544.44,352.71 Q 546.13,352.71 548.01,354.90 L 551.30,357.25 L 551.30,352.55 M 618.20,368.59 L 618.20,370.92 L 620.81,371.11 Q 620.35,370.50 620.35,369.80 Q 620.35,368.40 622.20,368.40 Q 624.00,368.40 624.00,369.80 Q 624.00,370.73 623.25,371.20 M 668.00,445.05 L 659.60,445.05 L 665.48,449.10 L 665.48,443.70 M 708.41,444.24 Q 707.00,443.60 707.00,442.00 Q 707.00,439.76 709.26,439.76 Q 711.42,439.76 711.42,442.16 Q 711.42,439.60 713.96,439.60 Q 716.40,439.60 716.40,442.00 Q 716.40,443.76 714.99,444.40 M 736.00,441.75 L 736.00,435.05 L 748.20,441.75 L 748.20,435.05 M 742.71,432.04 L 742.71,427.56 M 736.00,418.29 L 736.00,423.88 L 741.49,424.33 Q 740.51,422.88 740.51,421.20 Q 740.51,417.85 744.42,417.85 Q 748.20,417.85 748.20,421.20 Q 748.20,423.44 746.61,424.55 M 769.48,438.03 Q 767.05,437.77 767.05,435.60 Q 767.05,433.17 769.67,433.17 Q 771.41,433.17 773.36,435.60 L 776.75,438.20 L 776.75,433.00 M 827.75,451.18 L 825.90,450.31 L 834.30,450.31 M 619.00,592.97 L 619.00,595.72 L 621.61,595.94 Q 621.15,595.23 621.15,594.40 Q 621.15,592.75 623.00,592.75 Q 624.80,592.75 624.80,594.40 Q 624.80,595.50 624.05,596.05 M 641.95,636.03 L 641.95,629.50 L 654.45,636.03 L 654.45,629.50 M 648.83,626.58 L 648.83,622.22 M 645.08,619.08 Q 641.95,618.75 641.95,616.03 Q 641.95,612.99 645.33,612.99 Q 647.58,612.99 650.08,616.03 L 654.45,619.30 L 654.45,612.77 M 667.90,666.40 L 659.50,666.40 L 665.38,670.30 L 665.38,665.10 M 707.40,670.73 Q 705.90,670.03 705.90,668.30 Q 705.90,665.87 708.30,665.87 Q 710.60,665.87 710.60,668.47 Q 710.60,665.70 713.30,665.70 Q 715.90,665.70 715.90,668.30 Q 715.90,670.21 714.40,670.90 M 769.78,663.20 Q 767.35,662.98 767.35,661.10 Q 767.35,659.00 769.97,659.00 Q 771.72,659.00 773.66,661.10 L 777.05,663.35 L 777.05,658.85 M 828.08,674.06 L 826.10,672.99 L 835.10,672.99" fill="none" stroke="#ff2020" stroke-width="0.9" stroke-linecap="round" stroke-linejoin="round"/></g>
<line x1="437.5" y1="517.4" x2="472.5" y2="517.4" stroke="#1a1aff" stroke-width="1.4" stroke-dasharray="3,2"/>
<path d="M437.5,512 L442.9,517.4 L437.5,522.8 L432.1,517.4 Z" fill="#b4b4b4" stroke="#000" stroke-width="1.5" />
<path d="M472.5,512 L477.9,517.4 L472.5,522.8 L467.1,517.4 Z" fill="#b4b4b4" stroke="#000" stroke-width="1.5" />
<g clip-path="url(#cR)"><g transform="matrix(1.245,0,0,1.245,895.6,-34.4)"><g fill="none" stroke="#7b7bf2" stroke-width="0.72" stroke-linejoin="round"><g transform="translate(0,0)"><path d="M330.6,387 L318.8,384.2 L308,386.6 L291.6,392.7 L279.4,405.8 L278,410.5 L268.2,418.5 L243.8,434.9 L246.1,440.5 L252.2,446.2 L303,452.4 L317.3,482.7 L319.7,511.2 L327.2,532.9 L349.5,552.7 L364.3,558.3 L386.6,560.2 L442.4,559.5 L502.6,547.4 L530.1,549.6 L559.7,545.5 L573.9,531.7 L575.5,518.4 L544.7,517.5 L544.7,532.5 L539.3,532.5 L539.3,517.9 L486.5,517.5 L486.5,535.4 L481.3,535.4 L481.3,517.9 L425.7,517.4 L425.7,539.1 L420.1,539.1 L420.1,517.4 L384.8,517.4 L384.8,459.2 L378.6,453.6 L378.6,505 L373.3,505 L373.3,449.4 L368.6,444.8 L355.4,411 L349.8,399.7 L342.3,391.3 L335.7,388.9 L335.7,463.1 L330.6,463.1 Z"/><path d="M330.8,564.3 L313,563.3 L307.8,564.4 L290.4,572.9 L280.6,583.7 L279.2,587.9 L272.1,593.1 L251,602.9 L240.2,610.2 L246.8,617 L254.3,625.9 L277.3,625.9 L288.6,626.4 L304.9,631.8 L316.6,657.2 L321,695.6 L334.6,718.5 L346.4,729.6 L361.9,735.8 L399,737.1 L407.7,739.5 L436.2,739.5 L490,731.3 L508,726.3 L528.4,727.1 L560.5,724.2 L570.1,713.4 L573.9,711.7 L575.5,695.7 L545.1,695.4 L545.1,710.4 L539.7,710.4 L539.7,696 L486.7,695.4 L486.7,714.2 L481.3,714.2 L481.3,696 L425.7,695.6 L425.7,717.2 L420.1,717.2 L420.1,695.6 L385.4,695.6 L385.4,640.4 L378.6,633.4 L378.6,683.2 L373.6,683.2 L373.6,626.8 L363.2,611.4 L351,579 L336.4,566.1 L336.4,640.4 L330.8,640.4 Z"/><path d="M184.6,407.6 L204,409.3 L225.9,421.1 L240.2,456.4 L240.7,464.9 L237.4,464.9 L236.4,477.5 L233.5,476.7 L229.3,468.2 L225.1,474.1 L221.5,484.2 L217.5,484.2 L217.5,553.3 L211.6,559.2 L207.4,559.2 L207.4,484.2 L201.5,484.2 L201.5,560 L190.5,560 L190.5,484.2 L185.1,484.2 L185.1,559.2 L181.3,558.4 L173.7,550.8 L173.7,484.2 L168.3,484.2 L163.6,468.2 L156,478.3 L156,463.2 L151.8,463.2 L152.1,448.9 L163.6,421.9 Z M222,484.5 L222.5,489.3 M161.1,512 L168.3,508.2 L168.3,545.2 Z M222.2,510.3 L228.4,517.9 L222.5,547.4 Z"/><path d="M144.3,671.9 L141.4,657.5 L147.6,620.5 L170.4,585.1 L188.9,581.4 L207.4,584.3 L220.9,596.1 L226.8,610.4 L236.1,642.4 L236.9,671.9 L235.7,675.2 L235.7,659.2 L231,659.2 L231,704.7 L220.9,737.6 L217.5,737.6 L216.7,662.6 L211.7,662.6 L211.7,732.5 L206.6,721.6 L207.4,710 L205.8,690.4 L201.5,690.4 L201.5,636 L196.5,636 L195.6,689.6 L184.7,689.2 L184.7,636 L179.6,636 L179.6,689.6 L173.7,689.6 L172.1,732.5 L167.3,737.6 L167.3,664.6 L162.3,664.6 L162.3,738.4 L158.6,737.6 L152.7,723.2 L150.2,694.6 L150.2,653.3 L145.1,653.3 L145.1,671.9"/><path d="M618.5,298 L605.3,297.1 L583.4,305.5 L581.2,329.3 L585.3,339.6 L594.3,345.4 L605.9,344.8 L613.6,364.1 L623.3,380.8 L618.2,392.4 L619.6,414.3 L618.3,424 L630.3,444.6 L642.5,449.8 L650.2,457.9 L652.8,472.3 L659.3,487.1 L657.3,496.1 L636.7,508.4 L639.9,516.1 L658,516.1 L676.7,495.5 L677.3,486.5 L677.3,454.3 L687.6,453.4 L713.4,455.3 L739.1,451 L760.6,443.3 L792.8,437.3 L805.7,443.7 L808.3,448.5 L831.5,473 L852.7,485.2 L842.4,503.9 L834.1,509.7 L831.7,514.6 L837.9,515.9 L849.5,515.1 L875,485 L870,440 L862,427 L880,420 L856.6,408.5 L832.5,408.5 L832.5,440.4 L827.6,440.4 L827.6,409.4 L774.5,408.5 L774.5,425.3 L769,425.3 L769,409.4 L713.4,408.9 L713.4,432.4 L707.6,432.4 L707.6,409.2 L672.4,408.5 L672.6,367.3 L666.5,363.4 L666.3,436 L660.5,436 L660.7,360.9 L645.2,353.8 L642.6,347.3 L638.1,344.1 L649.7,339 L633.6,309.3 L623.7,300 L623.7,364.5 L618.5,364.5 Z"/><path d="M618.7,519.7 L608,518.8 L581.6,529.3 L578.4,540.3 L579.3,558.3 L584.8,564.1 L602.2,572.1 L622.2,601.5 L622.8,605.3 L616.4,627.2 L616.5,627.7 L619.3,651.6 L630.3,663.8 L634.1,670.9 L649.6,676.7 L654.8,683.4 L656.4,699.2 L660.5,708.9 L656,720.2 L638.6,730.1 L638.4,736.6 L640.6,739.2 L652.2,739.2 L676,718.6 L679.2,708.9 L679.6,678.6 L703.1,681.2 L718.5,679.9 L764.5,666.6 L785.1,663.2 L805.7,667.7 L825,689.6 L853.4,707 L843.1,728.9 L834.1,734.7 L833.4,738.3 L848.9,738.3 L875,710 L880,635.5 L833.4,635.5 L833.4,664.5 L827.9,664.5 L827.9,635.5 L774.8,635.5 L774.8,650.7 L769.4,650.7 L769.4,635.5 L713.6,635.5 L713.6,658.4 L708.2,658.4 L708.2,635.5 L673.2,635.5 L673.1,590.5 L666.6,586 L666.7,656.7 L661.2,656.7 L661.5,582.4 L644.7,572.5 L640.2,562.2 L648.6,557 L632.5,535.8 L629.3,526.7 L624.4,522.2 L624.4,587.9 L618.7,587.9 Z"/></g><g transform="translate(14.38,-13.17)"><path d="M387.2,387.9 L372.6,378 L351.9,359.6 L349.6,321 L365.6,312.3 L370.3,314.2 L383.5,328.5 L383.5,360.6 L388.6,360.6 L389.1,334.7 L398.5,345 L392.4,386.5"/><path d="M406.8,391.6 L401.1,363.4 L401.4,336.1 L404.9,328.5 L410.5,322.1 Q442.1,364.2 473.6,323.1 L480.7,338.4 L479.3,363.4 L477.4,392.1 L467.5,392.1 L467.5,363.4 L462.6,363.4 L462.3,391.1 L460,384.6 L452.2,374.2 L452.2,357.3 L447.3,357.3 L446.8,369.5 L444,368.5 L436,369.5 L435.5,356.6 L430.6,356.6 L430.3,372.8 L425.1,386.9 L419,391.4 L418.5,363.4 L413.6,363.4 L413.6,394.4"/><path d="M528.5,393 L528.7,371.7 L534.1,371.7 L534.3,391.4 L543.7,388.8 L544.2,365.3 L549.4,365.3 L549.4,385 L558.8,369 L561.6,357.7 L560.2,344.5 L560.7,330.4 L557.4,323.8 Q524.4,379.7 489.6,320.5 L483.3,338.4 L484.2,360.5 L492,379.8 L495.3,382.7 L495.5,362.2 L500.4,362.2 L500.4,386.9 L511.7,393 L512.5,371.7 L517.4,371.7 L517.4,393.5"/></g><g transform="translate(376.3,-63.8)"><path d="M161.5,294.2 L168.2,298.2 L180.5,303.4 L182.8,305.2 L182.8,336.3 L188.2,336.3 L188.2,312.3 L194.6,320.3 L199.3,333.5 L198.4,334 L192,368.3 L173.4,364.1 L151.8,340.6 L148.9,322.7 L151.8,304.3 Z"/></g><g transform="translate(533.9,-73.9)"><path d="M209.2,326.4 L212.5,326.4 L219.6,331.6 L219.6,349.5 L224.3,349.5 L224.7,335.4 L227.6,337.6 L228,340.6 L230.4,341 L237.5,358 L237,359.4 L220.5,367.9 L210.2,357.5 L209.7,332.1 L208.3,330.2 Z"/><path d="M240.8,330 L250.2,338.2 L250.2,352.3 L255.3,352.3 L255.8,343.9 L272.8,360.3 L247.3,367.9 L244,363.2 Z"/></g></g><path d="M 304.30,434.29 L 304.30,426.75 L 317.90,434.29 L 317.90,426.75 M 311.78,423.36 L 311.78,418.34 M 306.34,414.70 Q 304.30,413.70 304.30,411.18 Q 304.30,407.66 307.56,407.66 Q 310.69,407.66 310.69,411.43 Q 310.69,407.41 314.36,407.41 Q 317.90,407.41 317.90,411.18 Q 317.90,413.95 315.86,414.95 M 328.75,471.23 L 328.75,475.40 L 332.94,475.73 Q 332.19,474.65 332.19,473.40 Q 332.19,470.90 335.17,470.90 Q 338.05,470.90 338.05,473.40 Q 338.05,475.07 336.84,475.90 M 380.00,513.75 L 371.00,513.75 L 377.30,517.50 L 377.30,512.50 M 419.31,551.10 Q 417.90,550.50 417.90,549.00 Q 417.90,546.90 420.16,546.90 Q 422.32,546.90 422.32,549.15 Q 422.32,546.75 424.86,546.75 Q 427.30,546.75 427.30,549.00 Q 427.30,550.65 425.89,551.25 M 481.40,547.83 Q 479.00,547.58 479.00,545.50 Q 479.00,543.17 481.59,543.17 Q 483.32,543.17 485.24,545.50 L 488.60,548.00 L 488.60,543.00 M 539.88,543.49 L 538.05,542.39 L 546.35,542.39 M 343.90,675.96 L 343.90,668.24 L 356.90,675.96 L 356.90,668.24 M 351.05,664.77 L 351.05,659.63 M 356.90,650.37 L 343.90,650.37 L 353.00,656.16 L 353.00,648.44 M 328.70,648.83 L 328.70,653.00 L 332.93,653.33 Q 332.18,652.25 332.18,651.00 Q 332.18,648.50 335.19,648.50 Q 338.10,648.50 338.10,651.00 Q 338.10,652.67 336.88,653.50 M 380.50,692.45 L 371.50,692.45 L 377.80,696.20 L 377.80,691.20 M 419.91,729.90 Q 418.50,729.30 418.50,727.80 Q 418.50,725.70 420.76,725.70 Q 422.92,725.70 422.92,727.95 Q 422.92,725.55 425.46,725.55 Q 427.90,725.55 427.90,727.80 Q 427.90,729.45 426.49,730.05 M 481.80,726.53 Q 479.40,726.28 479.40,724.20 Q 479.40,721.87 481.99,721.87 Q 483.72,721.87 485.64,724.20 L 489.00,726.70 L 489.00,721.70 M 539.88,720.99 L 538.05,719.89 L 546.35,719.89 M 183.85,467.54 L 192.80,462.17 L 183.85,456.80 M 192.80,462.17 L 201.75,462.17 M 193.70,451.98 L 193.70,444.82 M 183.85,429.98 L 183.85,438.93 L 191.91,439.64 Q 190.47,437.32 190.47,434.63 Q 190.47,429.26 196.20,429.26 Q 201.75,429.26 201.75,434.63 Q 201.75,438.21 199.42,440.00 M 191.60,472.75 L 184.40,472.75 L 189.44,476.50 L 189.44,471.50 M 200.92,476.10 Q 199.60,475.50 199.60,474.00 Q 199.60,471.90 201.71,471.90 Q 203.74,471.90 203.74,474.15 Q 203.74,471.75 206.11,471.75 Q 208.40,471.75 208.40,474.00 Q 208.40,475.65 207.08,476.25 M 168.50,476.53 L 168.50,479.36 L 170.93,479.59 Q 170.50,478.85 170.50,478.00 Q 170.50,476.30 172.23,476.30 Q 173.90,476.30 173.90,478.00 Q 173.90,479.13 173.20,479.70 M 218.25,479.82 Q 216.90,479.62 216.90,478.00 Q 216.90,476.18 218.36,476.18 Q 219.33,476.18 220.41,478.00 L 222.30,479.95 L 222.30,476.05 M 154.00,456.08 Q 153.50,456.65 153.50,457.50 Q 153.50,459.09 156.25,459.09 L 157.00,459.09 Q 158.50,459.09 158.50,457.50 Q 158.50,455.80 157.00,455.80 Q 155.60,455.80 155.60,457.50 Q 155.60,459.09 156.75,459.09 M 237.80,463.10 L 237.25,462.43 L 239.75,462.43 M 186.40,626.95 L 192.30,623.23 L 186.40,619.52 M 192.30,623.23 L 198.20,623.23 M 192.89,616.18 L 192.89,611.22 M 198.20,602.31 L 186.40,602.31 L 194.66,607.88 L 194.66,600.45 M 181.95,624.00 L 174.45,624.00 L 179.70,627.00 L 179.70,623.00 M 195.70,626.87 Q 194.50,626.33 194.50,625.00 Q 194.50,623.13 196.42,623.13 Q 198.26,623.13 198.26,625.13 Q 198.26,623.00 200.42,623.00 Q 202.50,623.00 202.50,625.00 Q 202.50,626.47 201.30,627.00 M 147.10,645.54 Q 146.55,646.12 146.55,647.00 Q 146.55,648.63 149.58,648.63 L 150.40,648.63 Q 152.05,648.63 152.05,647.00 Q 152.05,645.25 150.40,645.25 Q 148.86,645.25 148.86,647.00 Q 148.86,648.63 150.12,648.63 M 160.80,651.05 L 160.80,654.80 L 164.85,655.10 Q 164.13,654.12 164.13,653.00 Q 164.13,650.75 167.01,650.75 Q 169.80,650.75 169.80,653.00 Q 169.80,654.50 168.63,655.25 M 212.07,653.10 Q 209.95,652.88 209.95,651.00 Q 209.95,648.90 212.24,648.90 Q 213.77,648.90 215.47,651.00 L 218.45,653.25 L 218.45,648.75 M 232.10,653.25 L 231.00,652.42 L 236.00,652.42 M 618.20,368.59 L 618.20,370.92 L 620.81,371.11 Q 620.35,370.50 620.35,369.80 Q 620.35,368.40 622.20,368.40 Q 624.00,368.40 624.00,369.80 Q 624.00,370.73 623.25,371.20 M 668.00,445.05 L 659.60,445.05 L 665.48,449.10 L 665.48,443.70 M 708.41,444.24 Q 707.00,443.60 707.00,442.00 Q 707.00,439.76 709.26,439.76 Q 711.42,439.76 711.42,442.16 Q 711.42,439.60 713.96,439.60 Q 716.40,439.60 716.40,442.00 Q 716.40,443.76 714.99,444.40 M 736.00,441.75 L 736.00,435.05 L 748.20,441.75 L 748.20,435.05 M 742.71,432.04 L 742.71,427.56 M 736.00,418.29 L 736.00,423.88 L 741.49,424.33 Q 740.51,422.88 740.51,421.20 Q 740.51,417.85 744.42,417.85 Q 748.20,417.85 748.20,421.20 Q 748.20,423.44 746.61,424.55 M 769.48,438.03 Q 767.05,437.77 767.05,435.60 Q 767.05,433.17 769.67,433.17 Q 771.41,433.17 773.36,435.60 L 776.75,438.20 L 776.75,433.00 M 827.75,451.18 L 825.90,450.31 L 834.30,450.31 M 619.00,592.97 L 619.00,595.72 L 621.61,595.94 Q 621.15,595.23 621.15,594.40 Q 621.15,592.75 623.00,592.75 Q 624.80,592.75 624.80,594.40 Q 624.80,595.50 624.05,596.05 M 641.95,636.03 L 641.95,629.50 L 654.45,636.03 L 654.45,629.50 M 648.83,626.58 L 648.83,622.22 M 645.08,619.08 Q 641.95,618.75 641.95,616.03 Q 641.95,612.99 645.33,612.99 Q 647.58,612.99 650.08,616.03 L 654.45,619.30 L 654.45,612.77 M 667.90,666.40 L 659.50,666.40 L 665.38,670.30 L 665.38,665.10 M 707.40,670.73 Q 705.90,670.03 705.90,668.30 Q 705.90,665.87 708.30,665.87 Q 710.60,665.87 710.60,668.47 Q 710.60,665.70 713.30,665.70 Q 715.90,665.70 715.90,668.30 Q 715.90,670.21 714.40,670.90 M 769.78,663.20 Q 767.35,662.98 767.35,661.10 Q 767.35,659.00 769.97,659.00 Q 771.72,659.00 773.66,661.10 L 777.05,663.35 L 777.05,658.85 M 828.08,674.06 L 826.10,672.99 L 835.10,672.99 M 374.33,344.70 L 374.33,339.48 L 384.23,344.70 L 384.23,339.48 M 379.77,337.15 L 379.77,333.67 M 376.51,330.29 L 374.33,328.56 L 384.23,328.56 M 379.77,323.79 L 379.77,320.31 M 376.51,316.93 L 374.33,315.20 L 384.23,315.20 M 404.93,356.55 L 396.43,356.55 L 402.38,360.08 L 402.38,355.38 M 422.13,345.70 L 426.58,343.13 L 422.13,340.56 M 426.58,343.13 L 431.03,343.13 M 427.02,338.25 L 427.02,334.81 M 424.09,331.47 L 422.13,329.76 L 431.03,329.76 M 430.03,339.29 L 430.03,343.21 L 432.14,343.52 Q 431.77,342.50 431.77,341.33 Q 431.77,338.98 433.27,338.98 Q 434.73,338.98 434.73,341.33 Q 434.73,342.90 434.12,343.68 M 452.03,332.58 L 443.13,332.58 L 449.36,335.73 L 449.36,331.53 M 460.72,335.42 Q 459.23,334.80 459.23,333.23 Q 459.23,331.04 461.61,331.04 Q 463.88,331.04 463.88,333.39 Q 463.88,330.88 466.56,330.88 Q 469.13,330.88 469.13,333.23 Q 469.13,334.95 467.64,335.58 M 476.98,342.22 Q 474.38,341.99 474.38,340.03 Q 474.38,337.84 477.19,337.84 Q 479.06,337.84 481.14,340.03 L 484.78,342.38 L 484.78,337.68 M 505.23,336.68 L 505.23,341.01 L 509.69,341.36 Q 508.89,340.23 508.89,338.93 Q 508.89,336.33 512.06,336.33 Q 515.13,336.33 515.13,338.93 Q 515.13,340.66 513.84,341.53 M 535.23,356.18 L 538.28,354.23 L 535.23,352.28 M 538.28,354.23 L 541.33,354.23 M 538.58,350.53 L 538.58,347.93 M 536.14,346.05 Q 535.23,345.53 535.23,344.23 Q 535.23,342.41 536.69,342.41 Q 538.10,342.41 538.10,344.36 Q 538.10,342.28 539.74,342.28 Q 541.33,342.28 541.33,344.23 Q 541.33,345.66 540.41,346.18 M 533.18,347.05 L 525.18,347.05 L 530.78,350.58 L 530.78,345.88 M 542.59,349.39 Q 541.18,348.83 541.18,347.43 Q 541.18,345.47 543.44,345.47 Q 545.60,345.47 545.60,347.57 Q 545.60,345.33 548.14,345.33 Q 550.58,345.33 550.58,347.43 Q 550.58,348.97 549.17,349.53 M 558.63,343.92 Q 556.28,343.69 556.28,341.73 Q 556.28,339.54 558.82,339.54 Q 560.51,339.54 562.39,341.73 L 565.68,344.08 L 565.68,339.38 M 542.20,279.80 L 542.20,274.80 L 553.00,279.80 L 553.00,274.80 M 548.14,272.56 L 548.14,269.24 M 543.28,262.42 Q 542.20,263.25 542.20,264.50 Q 542.20,266.83 548.14,266.83 L 549.76,266.83 Q 553.00,266.83 553.00,264.50 Q 553.00,262.00 549.76,262.00 Q 546.74,262.00 546.74,264.50 Q 546.74,266.83 549.22,266.83 M 548.14,259.76 L 548.14,256.44 M 544.58,253.20 L 542.20,251.53 L 553.00,251.53 M 565.80,282.32 L 557.80,282.32 L 563.40,285.85 L 563.40,281.15 M 746.65,279.49 L 746.65,276.55 L 751.35,279.49 L 751.35,276.55 M 749.24,275.24 L 749.24,273.28 M 747.12,269.28 Q 746.65,269.77 746.65,270.50 Q 746.65,271.87 749.24,271.87 L 749.94,271.87 Q 751.35,271.87 751.35,270.50 Q 751.35,269.03 749.94,269.03 Q 748.62,269.03 748.62,270.50 Q 748.62,271.87 749.71,271.87 M 749.24,267.72 L 749.24,265.76 M 747.83,264.35 Q 746.65,264.20 746.65,262.98 Q 746.65,261.61 747.92,261.61 Q 748.76,261.61 749.71,262.98 L 751.35,264.45 L 751.35,261.51 M 751.20,284.46 L 751.20,288.38 L 755.43,288.69 Q 754.68,287.68 754.68,286.50 Q 754.68,284.15 757.69,284.15 Q 760.60,284.15 760.60,286.50 Q 760.60,288.07 759.38,288.85 M 779.80,282.30 L 779.80,280.54 L 783.60,282.30 L 783.60,280.54 M 781.89,279.75 L 781.89,278.57 M 780.64,277.43 L 779.80,276.84 L 783.60,276.84 M 781.89,275.23 L 781.89,274.05 M 780.75,273.20 Q 779.80,273.11 779.80,272.38 Q 779.80,271.56 780.83,271.56 Q 781.51,271.56 782.27,272.38 L 783.60,273.26 L 783.60,271.50 M 781.70,287.18 L 781.70,290.68 L 785.93,290.96 Q 785.18,290.05 785.18,289.00 Q 785.18,286.90 788.19,286.90 Q 791.10,286.90 791.10,289.00 Q 791.10,290.40 789.88,291.10" fill="none" stroke="#ff8080" stroke-width="0.62" stroke-linecap="round" stroke-linejoin="round"/></g></g>
<line x1="1082" y1="559.2" x2="1083.1" y2="566.9" stroke="#7b7bf2" stroke-width="0.9" />
<rect x="1198.4" y="443.3" width="414" height="220" fill="none" stroke="#4a4ae0" stroke-width="1" stroke-dasharray="4,3"/>
<g transform="translate(1192,437) rotate(45)"><path d="M-8,0 L-3.5,-4.5 L-3.5,-1.6 L3.5,-1.6 L3.5,-4.5 L8,0 L3.5,4.5 L3.5,1.6 L-3.5,1.6 L-3.5,4.5 Z" fill="#000" stroke="#000" stroke-width="1"/></g>
<g transform="translate(1619,437) rotate(-45)"><path d="M-8,0 L-3.5,-4.5 L-3.5,-1.6 L3.5,-1.6 L3.5,-4.5 L8,0 L3.5,4.5 L3.5,1.6 L-3.5,1.6 L-3.5,4.5 Z" fill="#000" stroke="#000" stroke-width="1"/></g>
<g transform="translate(1192,669) rotate(-45)"><path d="M-8,0 L-3.5,-4.5 L-3.5,-1.6 L3.5,-1.6 L3.5,-4.5 L8,0 L3.5,4.5 L3.5,1.6 L-3.5,1.6 L-3.5,4.5 Z" fill="#000" stroke="#000" stroke-width="1"/></g>
<g transform="translate(1619,669) rotate(45)"><path d="M-8,0 L-3.5,-4.5 L-3.5,-1.6 L3.5,-1.6 L3.5,-4.5 L8,0 L3.5,4.5 L3.5,1.6 L-3.5,1.6 L-3.5,4.5 Z" fill="#000" stroke="#000" stroke-width="1"/></g>
<g transform="translate(1405,434.5) rotate(90)"><path d="M-8,0 L-3.5,-4.5 L-3.5,-1.6 L3.5,-1.6 L3.5,-4.5 L8,0 L3.5,4.5 L3.5,1.6 L-3.5,1.6 L-3.5,4.5 Z" fill="#000" stroke="#000" stroke-width="1"/></g>
<g transform="translate(1405,672) rotate(90)"><path d="M-8,0 L-3.5,-4.5 L-3.5,-1.6 L3.5,-1.6 L3.5,-4.5 L8,0 L3.5,4.5 L3.5,1.6 L-3.5,1.6 L-3.5,4.5 Z" fill="#000" stroke="#000" stroke-width="1"/></g>
<g transform="translate(1189,553) rotate(0)"><path d="M-8,0 L-3.5,-4.5 L-3.5,-1.6 L3.5,-1.6 L3.5,-4.5 L8,0 L3.5,4.5 L3.5,1.6 L-3.5,1.6 L-3.5,4.5 Z" fill="#000" stroke="#000" stroke-width="1"/></g>
<g transform="translate(1622,553) rotate(0)"><path d="M-8,0 L-3.5,-4.5 L-3.5,-1.6 L3.5,-1.6 L3.5,-4.5 L8,0 L3.5,4.5 L3.5,1.6 L-3.5,1.6 L-3.5,4.5 Z" fill="#000" stroke="#000" stroke-width="1"/></g>
<rect x="861" y="125" width="26" height="793" fill="#2f2f2f" />
<rect x="36" y="901" width="825" height="18" fill="#2f2f2f" />
<rect x="862" y="125.5" width="24" height="21" rx="4" fill="#2a2a2a" stroke="#1c1c1c"/>
<rect x="867.5" y="130" width="13" height="9" rx="1" fill="none" stroke="#e0e0e0" stroke-width="1.3"/>
<line x1="871" y1="141.5" x2="877" y2="141.5" stroke="#e0e0e0" stroke-width="1.3" />
<line x1="874" y1="139" x2="874" y2="141.5" stroke="#e0e0e0" stroke-width="1.3" />
<rect x="870" y="344" width="8.2" height="392" rx="4.1" fill="#a6a6a6"/>
<rect x="303.7" y="905.9" width="263.3" height="8.3" rx="4.1" fill="#a6a6a6"/>
<rect x="861.8" y="901.4" width="25" height="17.2" rx="4" fill="#2a2a2a" stroke="#1c1c1c"/>
<circle cx="874" cy="907" r="3.8" fill="none" stroke="#9a9a9a" stroke-width="1"/>
<circle cx="870" cy="914" r="3.8" fill="none" stroke="#9a9a9a" stroke-width="1"/>
<circle cx="878" cy="914" r="3.8" fill="none" stroke="#9a9a9a" stroke-width="1"/>
<circle cx="870" cy="914" r="2.4" fill="#1f7a1f"/><circle cx="878" cy="914" r="2.4" fill="#a8307f"/>
<rect x="1888" y="125" width="25" height="793" fill="#2a2a2a" />
<rect x="987" y="901" width="901" height="18" fill="#2b2b2b" />
<rect x="1889" y="125.5" width="24" height="21" rx="4" fill="#262626" stroke="#1a1a1a"/>
<rect x="1894.5" y="130" width="13" height="9" rx="1" fill="none" stroke="#d0d0d0" stroke-width="1.3"/>
<line x1="1898" y1="141.5" x2="1904" y2="141.5" stroke="#d0d0d0" stroke-width="1.3" />
<line x1="1901" y1="139" x2="1901" y2="141.5" stroke="#d0d0d0" stroke-width="1.3" />
<rect x="1897.4" y="350" width="7.5" height="310" rx="3.7" fill="#5a5a5a"/>
<rect x="1285.4" y="905.9" width="254.6" height="8.3" rx="4.1" fill="#5e5e5e"/>
<rect x="1888.7" y="901.6" width="24.6" height="17.2" rx="4" fill="#262626" stroke="#1a1a1a"/>
<circle cx="1901" cy="907" r="3.8" fill="none" stroke="#d8d8d8" stroke-width="1"/>
<circle cx="1897" cy="914" r="3.8" fill="none" stroke="#d8d8d8" stroke-width="1"/>
<circle cx="1905" cy="914" r="3.8" fill="none" stroke="#d8d8d8" stroke-width="1"/>
<circle cx="1897" cy="914" r="2.4" fill="#00a000"/><circle cx="1905" cy="914" r="2.4" fill="#ff1493"/>
<rect x="1913" y="125" width="5" height="795" fill="#333333" />
<line x1="908" y1="274.6" x2="944" y2="274.6" stroke="#2b2b2b" stroke-width="1" />
<line x1="908" y1="360" x2="944" y2="360" stroke="#2b2b2b" stroke-width="1" />
<line x1="908" y1="443.4" x2="944" y2="443.4" stroke="#2b2b2b" stroke-width="1" />
<line x1="908" y1="563" x2="944" y2="563" stroke="#2b2b2b" stroke-width="1" />
<line x1="908" y1="716.5" x2="944" y2="716.5" stroke="#2b2b2b" stroke-width="1" />
<line x1="908" y1="835.8" x2="944" y2="835.8" stroke="#2b2b2b" stroke-width="1" />
<path d="M919,141 L926,141 L930,145 L930,154 L919,154 Z" fill="none" stroke="#ececec" stroke-width="1.6" />
<path d="M929,138 L930,140 L932,140 L930.5,141.5 L931,143.5 L929,142.5 L927,143.5 L927.5,141.5 L926,140 L928,140 Z" fill="#0a0" stroke="none" stroke-width="1" />
<path d="M918.5,176 L923,176 L924.5,178 L931,178 L931,180 L921,180 L918.5,188 Z" fill="#ececec" stroke="none" stroke-width="1" />
<path d="M920.5,188 L922.5,181 L933,181 L931,188 Z" fill="#ececec" stroke="none" stroke-width="1" />
<path d="M925,207 L925,214 M922,211.5 L925,215 L928,211.5" fill="none" stroke="#0a0" stroke-width="1.8" />
<path d="M918.5,215 L918.5,222 L931.5,222 L931.5,215 L929,215 L929,217 L921,217 L921,215 Z" fill="#ececec" stroke="none" stroke-width="1" />
<rect x="921" y="244" width="8" height="3" fill="#ececec" />
<rect x="918" y="247.5" width="14" height="6" fill="#ececec" />
<rect x="921" y="252" width="8" height="4" fill="#ececec" />
<path d="M920,293 L927,293 L931,297 L931,307 L920,307 L920,302" fill="none" stroke="#ececec" stroke-width="1.6" />
<path d="M916,300.5 L924,300.5 M921.5,298 L924.5,300.5 L921.5,303" fill="none" stroke="#0a0" stroke-width="1.8" />
<path d="M930,334 L930,341 L919,341 L919,327 L926,327 L930,331" fill="none" stroke="#ececec" stroke-width="1.6" />
<path d="M925,334.5 L933,334.5 M930.5,332 L933.5,334.5 L930.5,337" fill="none" stroke="#0a0" stroke-width="1.8" />
<path d="M921,383.5 L927,383.5 Q931,383.5 931,387.5 Q931,391 927,391 L925,391 M923.5,380.5 L920.5,383.5 L923.5,386.5" fill="none" stroke="#ececec" stroke-width="1.6" />
<path d="M929,417.5 L923,417.5 Q919,417.5 919,421.5 Q919,425 923,425 L925,425 M926.5,414.5 L929.5,417.5 L926.5,420.5" fill="none" stroke="#ececec" stroke-width="1.6" />
<rect x="918.5" y="461.5" width="9" height="9" fill="#ececec" />
<rect x="922" y="465" width="10" height="10" fill="#ececec" stroke="#333" stroke-width="1"/>
<circle cx="921" cy="507" r="2.5" fill="none" stroke="#ececec" stroke-width="1.5"/><circle cx="929" cy="507" r="2.5" fill="none" stroke="#ececec" stroke-width="1.5"/>
<path d="M922,505 L929,496 M928,505 L921,496" fill="none" stroke="#ececec" stroke-width="1.5" />
<rect x="919" y="533" width="12" height="13" fill="#ececec" rx="1"/>
<rect x="922" y="531" width="6" height="3" fill="#ececec" />
<rect x="921" y="535.5" width="8" height="8.5" fill="#333" />
<rect x="922.5" y="537" width="5" height="5.5" fill="#ececec" />
<circle cx="924" cy="586" r="6" fill="#ececec"/>
<line x1="928" y1="590" x2="931.5" y2="593.5" stroke="#ececec" stroke-width="2.4" />
<rect x="920.5" y="582.5" width="7" height="7" fill="none" stroke="#333" stroke-width="1" stroke-dasharray="1,1"/>
<circle cx="924" cy="621" r="6" fill="#ececec"/>
<line x1="928" y1="625" x2="931.5" y2="628.5" stroke="#ececec" stroke-width="2.4" />
<circle cx="923" cy="620" r="2.3" fill="#333"/><rect x="923" y="621" width="4" height="4" fill="#333"/>
<circle cx="924" cy="656" r="6" fill="#ececec"/>
<line x1="928" y1="660" x2="931.5" y2="663.5" stroke="#ececec" stroke-width="2.4" />
<rect x="921.5" y="652" width="5" height="8" fill="#333" />
<rect x="919" y="686" width="12" height="12" fill="none" stroke="#ececec" stroke-width="1.2"/>
<line x1="925" y1="689" x2="925" y2="695" stroke="#ececec" stroke-width="1.2" />
<line x1="922" y1="692" x2="928" y2="692" stroke="#ececec" stroke-width="1.2" />
<rect x="918" y="734" width="10" height="9" fill="#ececec" />
<rect x="923.5" y="739.5" width="10" height="9" fill="#009900" />
<rect x="918" y="770" width="10" height="9" fill="none" stroke="#ececec" stroke-width="1.5"/>
<rect x="922.5" y="774.5" width="10" height="9" fill="#333" stroke="#ececec" stroke-width="1.5"/>
<rect x="925" y="778.5" width="5" height="4" fill="#ececec" />
<path d="M925.8,778.5 L925.8,777 A1.7,1.7 0 0 1 929.2,777 L929.2,778.5" fill="none" stroke="#ececec" stroke-width="1" />
<rect x="918" y="804.8" width="10" height="9" fill="none" stroke="#ececec" stroke-width="1.5"/>
<rect x="922.5" y="809.3" width="10" height="9" fill="#333" stroke="#ececec" stroke-width="1.5"/>
<rect x="925" y="813.3" width="5" height="4" fill="#ececec" />
<path d="M925.8,813.3 L925.8,811.8 A1.7,1.7 0 0 1 929.2,811.8 L929.2,813.3" fill="none" stroke="#ececec" stroke-width="1" />
<circle cx="922.5" cy="857" r="3" fill="#ececec"/>
<rect x="922" y="858" width="7" height="5" fill="#ececec" />
<rect x="916.9" y="851.9" width="2.2" height="2.2" fill="#00a000" />
<rect x="929.9" y="851.9" width="2.2" height="2.2" fill="#00a000" />
<rect x="916.9" y="864.9" width="2.2" height="2.2" fill="#00a000" />
<rect x="929.9" y="864.9" width="2.2" height="2.2" fill="#00a000" />
<path d="M922.7,893 L922.7,904.8 L929.2,898.9 Z" fill="#e6e6e6" stroke="none" stroke-width="1" />
<circle cx="893" cy="517" r="1.2" fill="#ddd"/><circle cx="893" cy="521.8" r="1.2" fill="#ddd"/><circle cx="893" cy="526.6" r="1.2" fill="#ddd"/>
<rect x="2" y="921" width="33" height="33" fill="#ffffff" />
<line x1="5.8" y1="924.5" x2="32" y2="950.5" stroke="#c8203a" stroke-width="3" stroke-linecap="round"/>
<line x1="32" y1="924.5" x2="5.8" y2="950.5" stroke="#c8203a" stroke-width="3" stroke-linecap="round"/>
<circle cx="18.7" cy="937.5" r="5.3" fill="#707070" opacity="0.45"/>
<rect x="36" y="938" width="16" height="16" fill="#000000" />
<rect x="53" y="938" width="16" height="16" fill="#1a1a1a" />
<rect x="70" y="938" width="16" height="16" fill="#333333" />
<rect x="87" y="938" width="16" height="16" fill="#4d4d4d" />
<rect x="104" y="938" width="16" height="16" fill="#666666" />
<rect x="121" y="938" width="16" height="16" fill="#808080" />
<rect x="138" y="938" width="16" height="16" fill="#999999" />
<rect x="155" y="938" width="16" height="16" fill="#b3b3b3" />
<rect x="172" y="938" width="16" height="16" fill="#cccccc" />
<rect x="189" y="938" width="16" height="16" fill="#e6e6e6" />
<rect x="206" y="938" width="16" height="16" fill="#ececec" />
<rect x="223" y="938" width="16" height="16" fill="#f2f2f2" />
<rect x="240" y="938" width="16" height="16" fill="#f9f9f9" />
<rect x="257" y="938" width="16" height="16" fill="#ffffff" />
<rect x="274" y="938" width="16" height="16" fill="#800000" />
<rect x="291" y="938" width="16" height="16" fill="#ff0000" />
<rect x="308" y="938" width="16" height="16" fill="#808000" />
<rect x="325" y="938" width="16" height="16" fill="#ffff00" />
<rect x="342" y="938" width="16" height="16" fill="#008000" />
<rect x="359" y="938" width="16" height="16" fill="#00ff00" />
<rect x="376" y="938" width="16" height="16" fill="#008080" />
<rect x="393" y="938" width="16" height="16" fill="#00ffff" />
<rect x="410" y="938" width="16" height="16" fill="#000080" />
<rect x="427" y="938" width="16" height="16" fill="#0000ff" />
<rect x="444" y="938" width="16" height="16" fill="#800080" />
<rect x="461" y="938" width="16" height="16" fill="#ff00ff" />
<rect x="478" y="938" width="16" height="16" fill="#2b0000" />
<rect x="495" y="938" width="16" height="16" fill="#550000" />
<rect x="512" y="938" width="16" height="16" fill="#800000" />
<rect x="529" y="938" width="16" height="16" fill="#aa0000" />
<rect x="546" y="938" width="16" height="16" fill="#d40000" />
<rect x="563" y="938" width="16" height="16" fill="#ff0000" />
<rect x="580" y="938" width="16" height="16" fill="#ff2a2a" />
<rect x="597" y="938" width="16" height="16" fill="#ff5555" />
<rect x="614" y="938" width="16" height="16" fill="#ff8080" />
<rect x="631" y="938" width="16" height="16" fill="#ffaaaa" />
<rect x="648" y="938" width="16" height="16" fill="#ffd5d5" />
<rect x="665" y="938" width="16" height="16" fill="#280b0b" />
<rect x="682" y="938" width="16" height="16" fill="#501616" />
<rect x="699" y="938" width="16" height="16" fill="#782121" />
<rect x="716" y="938" width="16" height="16" fill="#a02c2c" />
<rect x="733" y="938" width="16" height="16" fill="#c83737" />
<rect x="750" y="938" width="16" height="16" fill="#d35f5f" />
<rect x="767" y="938" width="16" height="16" fill="#de8787" />
<rect x="784" y="938" width="16" height="16" fill="#e9afaf" />
<rect x="801" y="938" width="16" height="16" fill="#f4d7d7" />
<rect x="818" y="938" width="16" height="16" fill="#241c1c" />
<rect x="835" y="938" width="16" height="16" fill="#483737" />
<circle cx="435.5" cy="946" r="4.6" fill="none" stroke="#ddd" stroke-width="1.2"/>
<path d="M874,941 L880,934 L886,941" fill="none" stroke="#e6e6e6" stroke-width="1.8" />
<path d="M904.5,934 L910.5,940.5 L916.5,934" fill="none" stroke="#e6e6e6" stroke-width="1.8" />
<rect x="927" y="928" width="19" height="26.5" rx="4" fill="#2f2f2f" stroke="#1f1f1f"/>
<line x1="930.5" y1="935.5" x2="942.5" y2="935.5" stroke="#eeeeee" stroke-width="1.8" />
<line x1="930.5" y1="941" x2="942.5" y2="941" stroke="#eeeeee" stroke-width="1.8" />
<line x1="930.5" y1="946.5" x2="942.5" y2="946.5" stroke="#eeeeee" stroke-width="1.8" />
<defs><linearGradient id="xg" x1="0" y1="0" x2="1" y2="1"><stop offset="0" stop-color="#f0f0f0"/><stop offset="1" stop-color="#c8c8c8"/></linearGradient></defs>
<rect x="953" y="921" width="33" height="33" fill="url(#xg)" />
<line x1="956.8" y1="924.5" x2="983" y2="950.5" stroke="#c8203a" stroke-width="3" stroke-linecap="round"/>
<line x1="983" y1="924.5" x2="956.8" y2="950.5" stroke="#c8203a" stroke-width="3" stroke-linecap="round"/>
<circle cx="969.7" cy="937.5" r="5.3" fill="#707070" opacity="0.45"/>
<rect x="987" y="938" width="16" height="16" fill="#000000" />
<rect x="1004" y="938" width="16" height="16" fill="#1a1a1a" />
<rect x="1021" y="938" width="16" height="16" fill="#333333" />
<rect x="1038" y="938" width="16" height="16" fill="#4d4d4d" />
<rect x="1055" y="938" width="16" height="16" fill="#666666" />
<rect x="1072" y="938" width="16" height="16" fill="#808080" />
<rect x="1089" y="938" width="16" height="16" fill="#999999" />
<rect x="1106" y="938" width="16" height="16" fill="#b3b3b3" />
<rect x="1123" y="938" width="16" height="16" fill="#cccccc" />
<rect x="1140" y="938" width="16" height="16" fill="#e6e6e6" />
<rect x="1157" y="938" width="16" height="16" fill="#ececec" />
<rect x="1174" y="938" width="16" height="16" fill="#f2f2f2" />
<rect x="1191" y="938" width="16" height="16" fill="#f9f9f9" />
<rect x="1208" y="938" width="16" height="16" fill="#ffffff" />
<rect x="1225" y="938" width="16" height="16" fill="#800000" />
<rect x="1242" y="938" width="16" height="16" fill="#ff0000" />
<rect x="1259" y="938" width="16" height="16" fill="#808000" />
<rect x="1276" y="938" width="16" height="16" fill="#ffff00" />
<rect x="1293" y="938" width="16" height="16" fill="#008000" />
<rect x="1310" y="938" width="16" height="16" fill="#00ff00" />
<rect x="1327" y="938" width="16" height="16" fill="#008080" />
<rect x="1344" y="938" width="16" height="16" fill="#00ffff" />
<rect x="1361" y="938" width="16" height="16" fill="#000080" />
<rect x="1378" y="938" width="16" height="16" fill="#0000ff" />
<rect x="1395" y="938" width="16" height="16" fill="#800080" />
<rect x="1412" y="938" width="16" height="16" fill="#ff00ff" />
<rect x="1429" y="938" width="16" height="16" fill="#2b0000" />
<rect x="1446" y="938" width="16" height="16" fill="#550000" />
<rect x="1463" y="938" width="16" height="16" fill="#800000" />
<rect x="1480" y="938" width="16" height="16" fill="#aa0000" />
<rect x="1497" y="938" width="16" height="16" fill="#d40000" />
<rect x="1514" y="938" width="16" height="16" fill="#ff0000" />
<rect x="1531" y="938" width="16" height="16" fill="#ff2a2a" />
<rect x="1548" y="938" width="16" height="16" fill="#ff5555" />
<rect x="1565" y="938" width="16" height="16" fill="#ff8080" />
<rect x="1582" y="938" width="16" height="16" fill="#ffaaaa" />
<rect x="1599" y="938" width="16" height="16" fill="#ffd5d5" />
<rect x="1616" y="938" width="16" height="16" fill="#280b0b" />
<rect x="1633" y="938" width="16" height="16" fill="#501616" />
<rect x="1650" y="938" width="16" height="16" fill="#782121" />
<rect x="1667" y="938" width="16" height="16" fill="#a02c2c" />
<rect x="1684" y="938" width="16" height="16" fill="#c83737" />
<rect x="1701" y="938" width="16" height="16" fill="#d35f5f" />
<rect x="1718" y="938" width="16" height="16" fill="#de8787" />
<rect x="1735" y="938" width="16" height="16" fill="#e9afaf" />
<rect x="1752" y="938" width="16" height="16" fill="#f4d7d7" />
<rect x="1769" y="938" width="16" height="16" fill="#241c1c" />
<rect x="1786" y="938" width="16" height="16" fill="#483737" />
<rect x="1803" y="938" width="16" height="16" fill="#6c5353" />
<rect x="1820" y="938" width="16" height="16" fill="#916f6f" />
<rect x="1837" y="938" width="16" height="16" fill="#ac9393" />
<rect x="1854" y="938" width="16" height="16" fill="#c8b7b7" />
<rect x="1871" y="938" width="16" height="16" fill="#e3dbdb" />
<circle cx="1386.5" cy="946" r="4.6" fill="none" stroke="#ddd" stroke-width="1.2"/>
<path d="M1901,941 L1907,934 L1913,941" fill="none" stroke="#e6e6e6" stroke-width="1.8" />
<text x="3.5" y="975.8" font-size="17" fill="#e8e8e8" textLength="60.5" lengthAdjust="spacingAndGlyphs" >Relleno:</text>
<text x="80" y="975.8" font-size="17" fill="#e8e8e8" textLength="68" lengthAdjust="spacingAndGlyphs" font-style="italic">Ninguno</text>
<text x="18.6" y="1000.8" font-size="17" fill="#e8e8e8" textLength="45.4" lengthAdjust="spacingAndGlyphs" >Trazo:</text>
<rect x="80" y="981" width="69.5" height="24" rx="3" fill="#0000ff"/>
<line x1="115" y1="981" x2="115" y2="1005" stroke="#4a4aff" stroke-width="1" />
<text x="156.6" y="1000.8" font-size="17" fill="#e8e8e8" textLength="33.4" lengthAdjust="spacingAndGlyphs" >3.78</text>
<text x="193.6" y="988" font-size="17" fill="#e8e8e8" textLength="17.4" lengthAdjust="spacingAndGlyphs" >O:</text>
<rect x="213.6" y="956.8" width="74" height="48.2" rx="6" fill="#2a2a2a" stroke="#1c1c1c" stroke-width="1"/>
<line x1="253.5" y1="957.8" x2="253.5" y2="1004.0" stroke="#262626" stroke-width="1" />
<line x1="270" y1="957.8" x2="270" y2="1004.0" stroke="#262626" stroke-width="1" />
<text x="224.5" y="988.5" font-size="17" fill="#e8e8e8" textLength="28.3" lengthAdjust="spacingAndGlyphs" >100</text>
<line x1="255.5" y1="981" x2="268.5" y2="981" stroke="#e8e8e8" stroke-width="2" />
<line x1="272.7" y1="981" x2="284" y2="981" stroke="#666666" stroke-width="1.8" />
<line x1="278.35" y1="975.3" x2="278.35" y2="986.7" stroke="#666666" stroke-width="1.8" />
<text x="954.5" y="975.8" font-size="17" fill="#9a9a9a" textLength="60.5" lengthAdjust="spacingAndGlyphs" >Relleno:</text>
<text x="1031" y="975.8" font-size="17" fill="#9a9a9a" textLength="68" lengthAdjust="spacingAndGlyphs" font-style="italic">Ninguno</text>
<text x="969.6" y="1000.8" font-size="17" fill="#9a9a9a" textLength="45.4" lengthAdjust="spacingAndGlyphs" >Trazo:</text>
<rect x="1031" y="981" width="69.5" height="24" rx="3" fill="#0000ff"/>
<line x1="1066" y1="981" x2="1066" y2="1005" stroke="#4a4aff" stroke-width="1" />
<text x="1107.6" y="1000.8" font-size="17" fill="#9a9a9a" textLength="30.5" lengthAdjust="spacingAndGlyphs" >1.33</text>
<text x="1144.6" y="988" font-size="17" fill="#9a9a9a" textLength="17.4" lengthAdjust="spacingAndGlyphs" >O:</text>
<rect x="1164.6" y="956.8" width="74" height="48.2" rx="6" fill="#2a2a2a" stroke="#1c1c1c" stroke-width="1"/>
<line x1="1204.5" y1="957.8" x2="1204.5" y2="1004.0" stroke="#262626" stroke-width="1" />
<line x1="1221" y1="957.8" x2="1221" y2="1004.0" stroke="#262626" stroke-width="1" />
<text x="1175.5" y="988.5" font-size="17" fill="#cfcfcf" textLength="28.3" lengthAdjust="spacingAndGlyphs" >100</text>
<line x1="1206.5" y1="981" x2="1219.5" y2="981" stroke="#8a8a8a" stroke-width="2" />
<line x1="1223.7" y1="981" x2="1235" y2="981" stroke="#666666" stroke-width="1.8" />
<line x1="1229.35" y1="975.3" x2="1229.35" y2="986.7" stroke="#666666" stroke-width="1.8" />
<rect x="301" y="967.6" width="3" height="25" fill="#f08030" />
<text x="310.3" y="988" font-size="17" fill="#e8e8e8" textLength="45" lengthAdjust="spacingAndGlyphs" >frame</text>
<path d="M376.5,981.5 Q384,974.5 391.5,981.5 Q384,988.5 376.5,981.5 Z" fill="none" stroke="#e8e8e8" stroke-width="1.7" />
<circle cx="384" cy="981.5" r="2.2" fill="#e8e8e8"/>
<line x1="380.4" y1="976.5" x2="379.2" y2="974.0" stroke="#e8e8e8" stroke-width="1.2" />
<line x1="384.0" y1="976.5" x2="384.0" y2="974.0" stroke="#e8e8e8" stroke-width="1.2" />
<line x1="387.6" y1="976.5" x2="388.8" y2="974.0" stroke="#e8e8e8" stroke-width="1.2" />
<rect x="414" y="980.5" width="10" height="8" fill="#e8e8e8" />
<path d="M420.5,980.5 L420.5,977.5 A3,3 0 0 1 426.5,977.5 L426.5,979" fill="none" stroke="#e8e8e8" stroke-width="1.8" />
<line x1="438" y1="960" x2="438" y2="1004" stroke="#2b2b2b" stroke-width="1" />
<text x="446.7" y="975" font-size="17" fill="#e8e8e8" textLength="61.3" lengthAdjust="spacingAndGlyphs" >Arrastre</text>
<text x="446.7" y="1000.4" font-size="17" fill="#e8e8e8" textLength="97.3" lengthAdjust="spacingAndGlyphs" >para selecc...</text>
<line x1="547.3" y1="960" x2="547.3" y2="1004" stroke="#2b2b2b" stroke-width="1" />
<text x="557.8" y="975" font-size="17" fill="#e8e8e8" textLength="14.2" lengthAdjust="spacingAndGlyphs" >X:</text>
<text x="583" y="975" font-size="17" fill="#e8e8e8" textLength="63.4" lengthAdjust="spacingAndGlyphs" >2041.77</text>
<text x="557.8" y="1000.4" font-size="17" fill="#e8e8e8" textLength="14.2" lengthAdjust="spacingAndGlyphs" >Y:</text>
<text x="583" y="1000.4" font-size="17" fill="#e8e8e8" textLength="63.4" lengthAdjust="spacingAndGlyphs" >1842.90</text>
<text x="656.8" y="988" font-size="17" fill="#e8e8e8" textLength="13.8" lengthAdjust="spacingAndGlyphs" >Z:</text>
<rect x="671.7" y="957" width="110.8" height="48" rx="6" fill="#2a2a2a" stroke="#1c1c1c" stroke-width="1"/>
<line x1="738.4" y1="958" x2="738.4" y2="1004" stroke="#262626" stroke-width="1" />
<line x1="759.3" y1="958" x2="759.3" y2="1004" stroke="#262626" stroke-width="1" />
<text x="686.3" y="988.5" font-size="17" fill="#e8e8e8" textLength="34.4" lengthAdjust="spacingAndGlyphs" >23%</text>
<line x1="742.8" y1="981" x2="755.5" y2="981" stroke="#e8e8e8" stroke-width="2" />
<line x1="763.7" y1="981" x2="776" y2="981" stroke="#e8e8e8" stroke-width="2" />
<line x1="769.85" y1="975" x2="769.85" y2="987" stroke="#e8e8e8" stroke-width="2" />
<text x="793.7" y="988" font-size="17" fill="#e8e8e8" textLength="14.3" lengthAdjust="spacingAndGlyphs" >R:</text>
<rect x="808.5" y="957" width="120.7" height="48" rx="6" fill="#2a2a2a" stroke="#1c1c1c" stroke-width="1"/>
<line x1="884" y1="958" x2="884" y2="1004" stroke="#262626" stroke-width="1" />
<line x1="905" y1="958" x2="905" y2="1004" stroke="#262626" stroke-width="1" />
<text x="828" y="988.5" font-size="17" fill="#e8e8e8" textLength="41.3" lengthAdjust="spacingAndGlyphs" >0.00°</text>
<line x1="889" y1="981" x2="901" y2="981" stroke="#e8e8e8" stroke-width="2" />
<line x1="910" y1="981" x2="923" y2="981" stroke="#e8e8e8" stroke-width="2" />
<line x1="916.5" y1="975" x2="916.5" y2="987" stroke="#e8e8e8" stroke-width="2" />
<rect x="1252" y="968.6" width="3" height="24" fill="#3a7fe0" />
<text x="1262.5" y="988" font-size="17" fill="#9a9a9a" textLength="7.5" lengthAdjust="spacingAndGlyphs" >1</text>
<path d="M1291.5,981.5 Q1299,974.5 1306.5,981.5 Q1299,988.5 1291.5,981.5 Z" fill="none" stroke="#d8d8d8" stroke-width="1.7" />
<circle cx="1299" cy="981.5" r="2.2" fill="#d8d8d8"/>
<line x1="1295.4" y1="976.5" x2="1294.2" y2="974.0" stroke="#d8d8d8" stroke-width="1.2" />
<line x1="1299.0" y1="976.5" x2="1299.0" y2="974.0" stroke="#d8d8d8" stroke-width="1.2" />
<line x1="1302.6" y1="976.5" x2="1303.8" y2="974.0" stroke="#d8d8d8" stroke-width="1.2" />
<rect x="1329.7" y="980.5" width="10" height="8" fill="#d8d8d8" />
<path d="M1336.2,980.5 L1336.2,977.5 A3,3 0 0 1 1342.2,977.5 L1342.2,979" fill="none" stroke="#d8d8d8" stroke-width="1.8" />
<line x1="1353" y1="960" x2="1353" y2="1004" stroke="#282828" stroke-width="1" />
<text x="1361.8" y="975" font-size="17" fill="#9a9a9a" textLength="71.7" lengthAdjust="spacingAndGlyphs" font-weight="bold">Trayecto</text>
<text x="1361.8" y="1000.8" font-size="17" fill="#9a9a9a" textLength="67.6" lengthAdjust="spacingAndGlyphs" >106 no...</text>
<path d="M1458.4,975 L1458.4,987 L1450.6,981 Z" fill="#8a8a8a" stroke="none" stroke-width="1" />
<rect x="1472.2" y="957" width="65.2" height="48" rx="6" fill="#2a2a2a" stroke="#1c1c1c" stroke-width="1"/>
<text x="1484.5" y="988" font-size="15" fill="#8a8a8a" textLength="24.5" lengthAdjust="spacingAndGlyphs" font-family="Liberation Mono">1.1</text>
<path d="M1514.5,978 L1525.4,978 L1520,984.5 Z" fill="#9a9a9a" stroke="none" stroke-width="1" />
<path d="M1552.3,975 L1552.3,987 L1558.8,981 Z" fill="#8a8a8a" stroke="none" stroke-width="1" />
<line x1="1574" y1="960" x2="1574" y2="1004" stroke="#282828" stroke-width="1" />
<text x="1584.8" y="975" font-size="17" fill="#9a9a9a" textLength="15.7" lengthAdjust="spacingAndGlyphs" >X:</text>
<text x="1630.5" y="975" font-size="17" fill="#9a9a9a" textLength="42.5" lengthAdjust="spacingAndGlyphs" >46.12</text>
<text x="1584.8" y="1000.4" font-size="17" fill="#9a9a9a" textLength="15.7" lengthAdjust="spacingAndGlyphs" >Y:</text>
<text x="1611.4" y="1000.4" font-size="17" fill="#9a9a9a" textLength="61.6" lengthAdjust="spacingAndGlyphs" >1447.42</text>
<text x="1683.9" y="988" font-size="17" fill="#9a9a9a" textLength="13.6" lengthAdjust="spacingAndGlyphs" >Z:</text>
<rect x="1698.2" y="957" width="111.4" height="48" rx="6" fill="#2a2a2a" stroke="#1c1c1c" stroke-width="1"/>
<line x1="1765" y1="958" x2="1765" y2="1004" stroke="#262626" stroke-width="1" />
<line x1="1786" y1="958" x2="1786" y2="1004" stroke="#262626" stroke-width="1" />
<text x="1713.4" y="988.5" font-size="17" fill="#d0d0d0" textLength="34.4" lengthAdjust="spacingAndGlyphs" >28%</text>
<line x1="1770" y1="981" x2="1782.4" y2="981" stroke="#9a9a9a" stroke-width="2" />
<line x1="1791.3" y1="981" x2="1803.3" y2="981" stroke="#c0c0c0" stroke-width="2" />
<line x1="1797.3" y1="975" x2="1797.3" y2="987" stroke="#c0c0c0" stroke-width="2" />
<text x="1820.8" y="988" font-size="17" fill="#9a9a9a" textLength="13.8" lengthAdjust="spacingAndGlyphs" >R:</text>
<rect x="1835" y="957" width="100" height="48" rx="6" fill="#2a2a2a" stroke="#1c1c1c" stroke-width="1"/>
<text x="1855.4" y="988.5" font-size="17" fill="#d0d0d0" textLength="40.2" lengthAdjust="spacingAndGlyphs" >0.00°</text></svg></body></html>
